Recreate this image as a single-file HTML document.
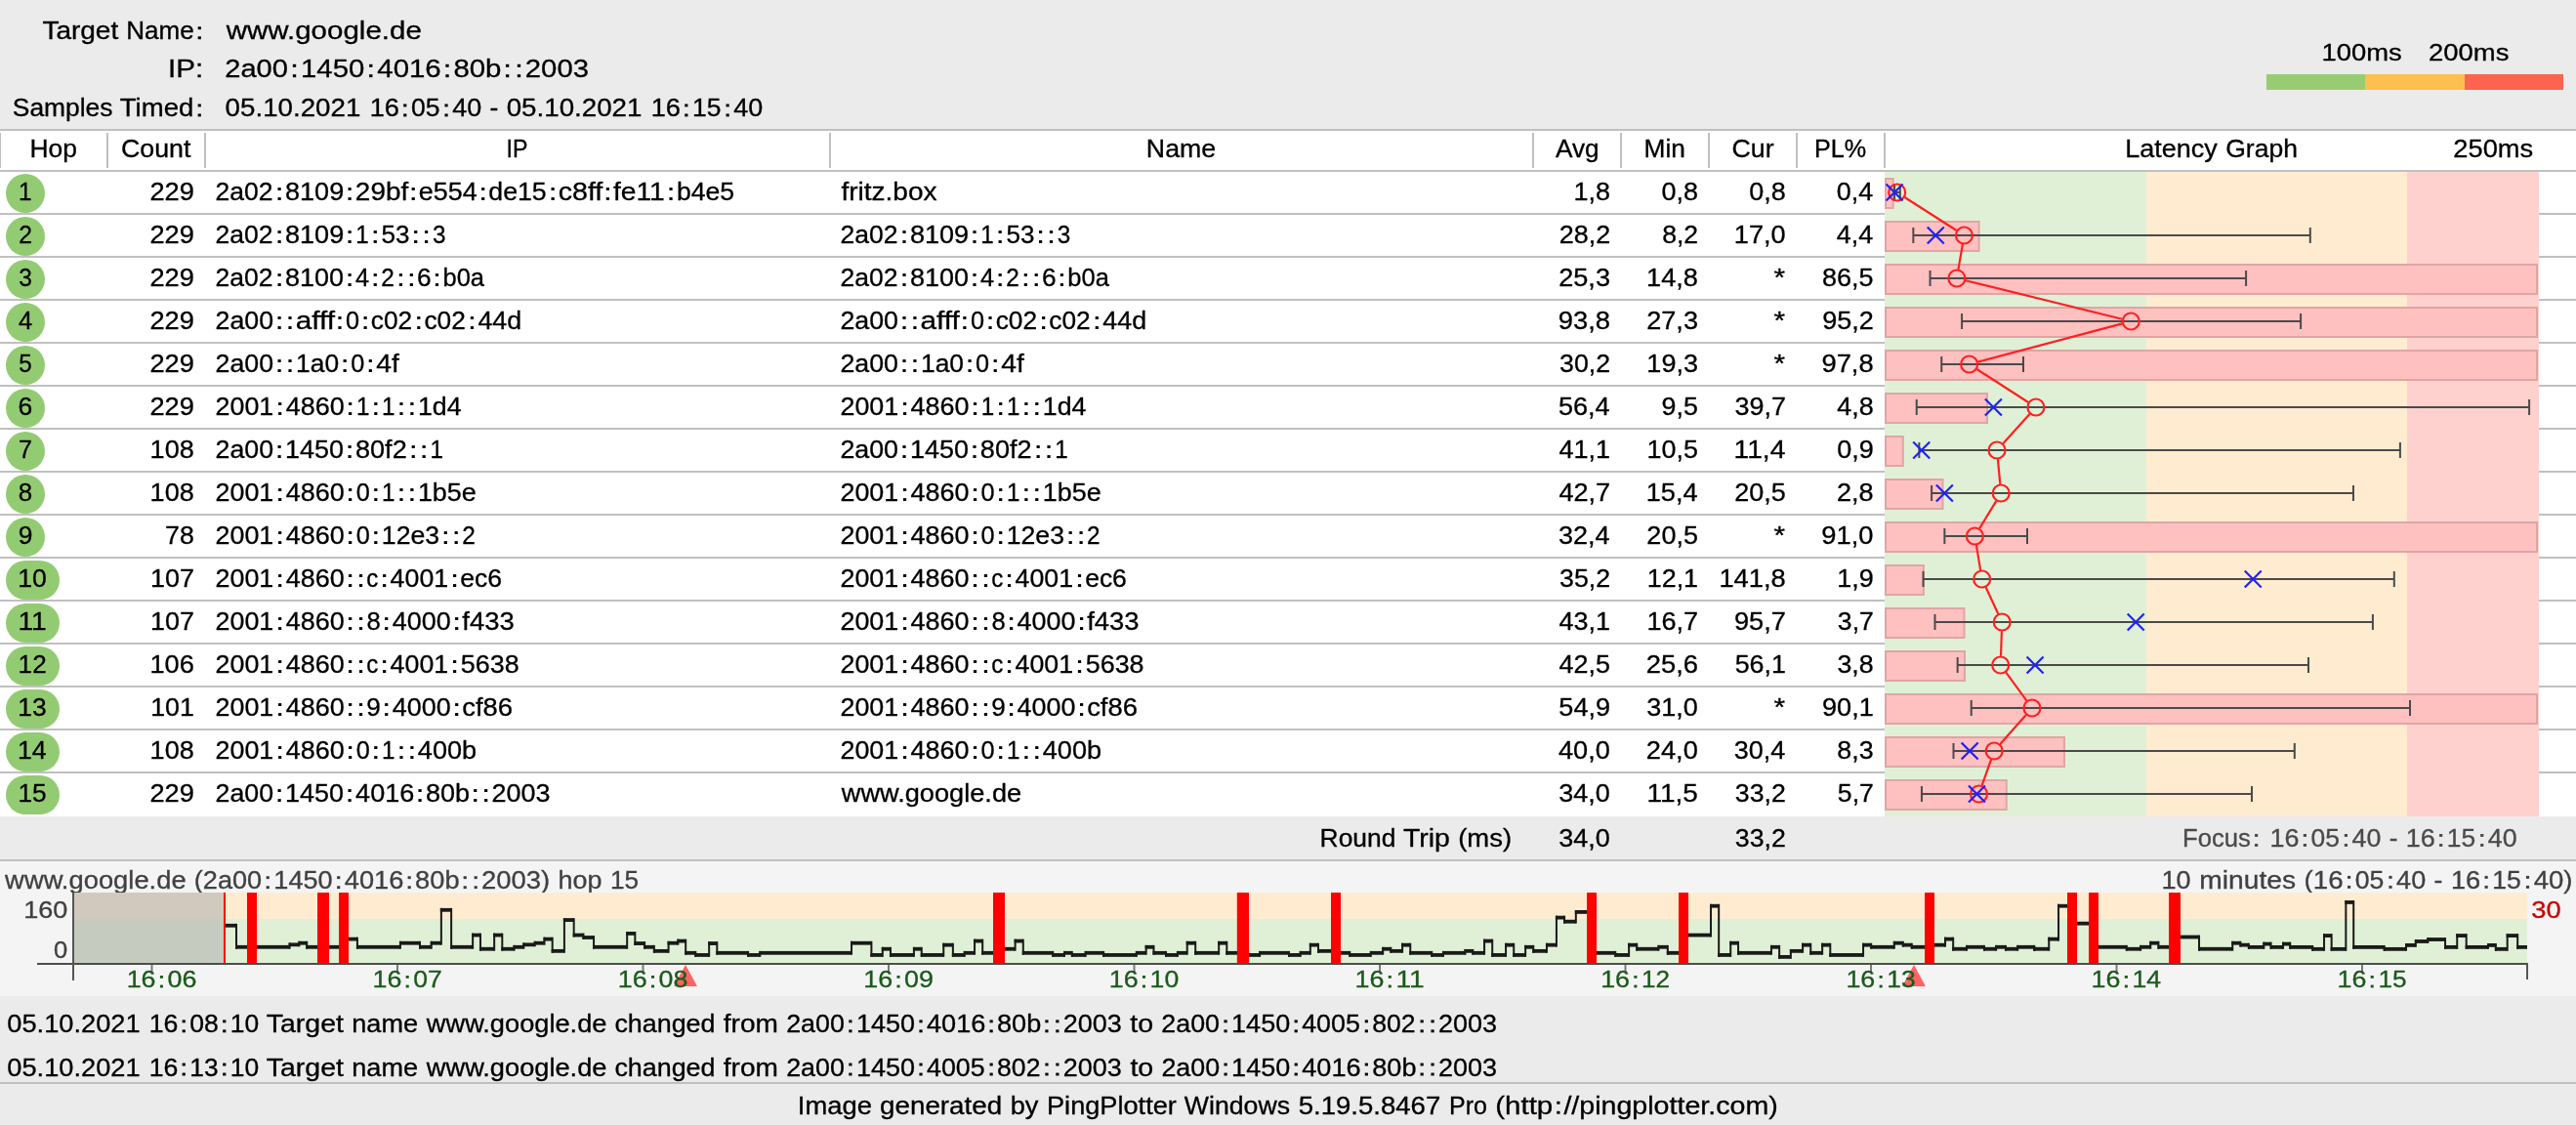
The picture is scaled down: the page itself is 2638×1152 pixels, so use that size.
<!DOCTYPE html>
<html><head><meta charset="utf-8"><title>PingPlotter</title>
<style>html,body{margin:0;padding:0;background:#fff;width:2638px;height:1152px;overflow:hidden}svg text{font-family:"Liberation Sans", sans-serif} svg{will-change:transform}</style>
</head><body>
<svg width="2638" height="1152" viewBox="0 0 2638 1152" style="display:block"><rect x="0.00" y="0.00" width="2638.00" height="132.00" fill="#ebebeb" />
<text x="43.40" y="40.20" font-size="25" fill="#000" stroke="#000" stroke-width="0.3" textLength="77.83" lengthAdjust="spacingAndGlyphs">Target</text>
<text x="129.29" y="40.20" font-size="25" fill="#000" stroke="#000" stroke-width="0.3" textLength="69.51" lengthAdjust="spacingAndGlyphs">Name</text>
<rect x="202.68" y="27.30" width="3.20" height="2.90" fill="#000"/>
<rect x="202.68" y="37.30" width="3.20" height="2.90" fill="#000"/>
<text x="171.96" y="79.20" font-size="25" fill="#000" stroke="#000" stroke-width="0.3" textLength="36.24" lengthAdjust="spacingAndGlyphs">IP:</text>
<text x="12.80" y="119.40" font-size="25" fill="#000" stroke="#000" stroke-width="0.3" textLength="102.71" lengthAdjust="spacingAndGlyphs">Samples</text>
<text x="122.75" y="119.40" font-size="25" fill="#000" stroke="#000" stroke-width="0.3" textLength="75.56" lengthAdjust="spacingAndGlyphs">Timed</text>
<rect x="202.65" y="106.50" width="3.20" height="2.90" fill="#000"/>
<rect x="202.65" y="116.50" width="3.20" height="2.90" fill="#000"/>
<text x="231.74" y="40.20" font-size="26" fill="#000" stroke="#000" stroke-width="0.3" textLength="200.06" lengthAdjust="spacingAndGlyphs">www.google.de</text>
<text x="230.24" y="79.20" font-size="26" fill="#000" stroke="#000" stroke-width="0.3" textLength="64.75" lengthAdjust="spacingAndGlyphs">2a00</text>
<rect x="299.85" y="65.78" width="3.33" height="3.02" fill="#000"/>
<rect x="299.85" y="76.18" width="3.33" height="3.02" fill="#000"/>
<text x="308.06" y="79.20" font-size="26" fill="#000" stroke="#000" stroke-width="0.3" textLength="65.18" lengthAdjust="spacingAndGlyphs">1450</text>
<rect x="378.10" y="65.78" width="3.33" height="3.02" fill="#000"/>
<rect x="378.10" y="76.18" width="3.33" height="3.02" fill="#000"/>
<text x="386.28" y="79.20" font-size="26" fill="#000" stroke="#000" stroke-width="0.3" textLength="65.45" lengthAdjust="spacingAndGlyphs">4016</text>
<rect x="456.35" y="65.78" width="3.33" height="3.02" fill="#000"/>
<rect x="456.35" y="76.18" width="3.33" height="3.02" fill="#000"/>
<text x="464.42" y="79.20" font-size="26" fill="#000" stroke="#000" stroke-width="0.3" textLength="49.08" lengthAdjust="spacingAndGlyphs">80b</text>
<rect x="517.96" y="65.78" width="3.33" height="3.02" fill="#000"/>
<rect x="517.96" y="76.18" width="3.33" height="3.02" fill="#000"/>
<rect x="529.81" y="65.78" width="3.33" height="3.02" fill="#000"/>
<rect x="529.81" y="76.18" width="3.33" height="3.02" fill="#000"/>
<text x="537.83" y="79.20" font-size="26" fill="#000" stroke="#000" stroke-width="0.3" textLength="65.16" lengthAdjust="spacingAndGlyphs">2003</text>
<text x="230.62" y="119.40" font-size="25" fill="#000" stroke="#000" stroke-width="0.3" textLength="138.75" lengthAdjust="spacingAndGlyphs">05.10.2021</text>
<text x="378.68" y="119.40" font-size="25" fill="#000" stroke="#000" stroke-width="0.3" textLength="30.18" lengthAdjust="spacingAndGlyphs">16</text>
<rect x="413.17" y="106.50" width="3.20" height="2.90" fill="#000"/>
<rect x="413.17" y="116.50" width="3.20" height="2.90" fill="#000"/>
<text x="420.90" y="119.40" font-size="25" fill="#000" stroke="#000" stroke-width="0.3" textLength="29.55" lengthAdjust="spacingAndGlyphs">05</text>
<rect x="455.45" y="106.50" width="3.20" height="2.90" fill="#000"/>
<rect x="455.45" y="116.50" width="3.20" height="2.90" fill="#000"/>
<text x="463.18" y="119.40" font-size="25" fill="#000" stroke="#000" stroke-width="0.3" textLength="30.01" lengthAdjust="spacingAndGlyphs">40</text>
<text x="501.56" y="119.40" font-size="25" fill="#000" stroke="#000" stroke-width="0.3" textLength="8.79" lengthAdjust="spacingAndGlyphs">-</text>
<text x="518.69" y="119.40" font-size="25" fill="#000" stroke="#000" stroke-width="0.3" textLength="138.75" lengthAdjust="spacingAndGlyphs">05.10.2021</text>
<text x="666.75" y="119.40" font-size="25" fill="#000" stroke="#000" stroke-width="0.3" textLength="30.18" lengthAdjust="spacingAndGlyphs">16</text>
<rect x="701.24" y="106.50" width="3.20" height="2.90" fill="#000"/>
<rect x="701.24" y="116.50" width="3.20" height="2.90" fill="#000"/>
<text x="709.07" y="119.40" font-size="25" fill="#000" stroke="#000" stroke-width="0.3" textLength="29.45" lengthAdjust="spacingAndGlyphs">15</text>
<rect x="743.52" y="106.50" width="3.20" height="2.90" fill="#000"/>
<rect x="743.52" y="116.50" width="3.20" height="2.90" fill="#000"/>
<text x="751.25" y="119.40" font-size="25" fill="#000" stroke="#000" stroke-width="0.3" textLength="30.01" lengthAdjust="spacingAndGlyphs">40</text>
<text x="2377.51" y="61.60" font-size="24" fill="#000" stroke="#000" stroke-width="0.3" textLength="82.28" lengthAdjust="spacingAndGlyphs">100ms</text>
<text x="2487.02" y="61.60" font-size="24" fill="#000" stroke="#000" stroke-width="0.3" textLength="82.37" lengthAdjust="spacingAndGlyphs">200ms</text>
<rect x="2321.00" y="76.00" width="101.00" height="16.00" fill="#98cc72" />
<rect x="2422.00" y="76.00" width="102.00" height="16.00" fill="#fdbf50" />
<rect x="2524.00" y="76.00" width="101.00" height="16.00" fill="#fc6450" />
<rect x="0.00" y="132.00" width="2638.00" height="704.00" fill="#fff" />
<rect x="0.00" y="132.00" width="2638.00" height="2.00" fill="#c0c0c0" />
<rect x="0.00" y="174.00" width="2638.00" height="2.00" fill="#c0c0c0" />
<rect x="0.00" y="136.00" width="1.00" height="36.00" fill="#c0c0c0" />
<rect x="109.00" y="136.00" width="2.00" height="36.00" fill="#c0c0c0" />
<rect x="209.00" y="136.00" width="2.00" height="36.00" fill="#c0c0c0" />
<rect x="849.00" y="136.00" width="2.00" height="36.00" fill="#c0c0c0" />
<rect x="1569.00" y="136.00" width="2.00" height="36.00" fill="#c0c0c0" />
<rect x="1659.00" y="136.00" width="2.00" height="36.00" fill="#c0c0c0" />
<rect x="1749.00" y="136.00" width="2.00" height="36.00" fill="#c0c0c0" />
<rect x="1839.00" y="136.00" width="2.00" height="36.00" fill="#c0c0c0" />
<rect x="1929.00" y="136.00" width="2.00" height="36.00" fill="#c0c0c0" />
<text x="30.43" y="161.00" font-size="25" fill="#000" stroke="#000" stroke-width="0.3" textLength="48.48" lengthAdjust="spacingAndGlyphs">Hop</text>
<text x="123.94" y="161.00" font-size="25" fill="#000" stroke="#000" stroke-width="0.3" textLength="71.46" lengthAdjust="spacingAndGlyphs">Count</text>
<text x="518.58" y="161.00" font-size="25" fill="#000" stroke="#000" stroke-width="0.3" textLength="21.92" lengthAdjust="spacingAndGlyphs">IP</text>
<text x="1173.89" y="161.00" font-size="25" fill="#000" stroke="#000" stroke-width="0.3" textLength="71.22" lengthAdjust="spacingAndGlyphs">Name</text>
<text x="1592.95" y="161.00" font-size="25" fill="#000" stroke="#000" stroke-width="0.3" textLength="44.72" lengthAdjust="spacingAndGlyphs">Avg</text>
<text x="1683.64" y="161.00" font-size="25" fill="#000" stroke="#000" stroke-width="0.3" textLength="42.36" lengthAdjust="spacingAndGlyphs">Min</text>
<text x="1773.44" y="161.00" font-size="25" fill="#000" stroke="#000" stroke-width="0.3" textLength="43.21" lengthAdjust="spacingAndGlyphs">Cur</text>
<text x="1858.04" y="161.00" font-size="25" fill="#000" stroke="#000" stroke-width="0.3" textLength="53.16" lengthAdjust="spacingAndGlyphs">PL%</text>
<text x="2176.28" y="161.00" font-size="25" fill="#000" stroke="#000" stroke-width="0.3" textLength="94.59" lengthAdjust="spacingAndGlyphs">Latency</text>
<text x="2279.23" y="161.00" font-size="25" fill="#000" stroke="#000" stroke-width="0.3" textLength="73.69" lengthAdjust="spacingAndGlyphs">Graph</text>
<text x="2512.33" y="161.00" font-size="25" fill="#000" stroke="#000" stroke-width="0.3" textLength="81.86" lengthAdjust="spacingAndGlyphs">250ms</text>
<rect x="1930.00" y="176.00" width="268.00" height="660.00" fill="#e0f0d6" />
<rect x="2198.00" y="176.00" width="267.00" height="660.00" fill="#ffecd0" />
<rect x="2465.00" y="176.00" width="135.00" height="660.00" fill="#fed1ce" />
<rect x="0.00" y="218.00" width="1930.00" height="2.00" fill="#c0c0c0" />
<rect x="2600.00" y="218.00" width="38.00" height="2.00" fill="#c0c0c0" />
<rect x="0.00" y="262.00" width="1930.00" height="2.00" fill="#c0c0c0" />
<rect x="2600.00" y="262.00" width="38.00" height="2.00" fill="#c0c0c0" />
<rect x="0.00" y="306.00" width="1930.00" height="2.00" fill="#c0c0c0" />
<rect x="2600.00" y="306.00" width="38.00" height="2.00" fill="#c0c0c0" />
<rect x="0.00" y="350.00" width="1930.00" height="2.00" fill="#c0c0c0" />
<rect x="2600.00" y="350.00" width="38.00" height="2.00" fill="#c0c0c0" />
<rect x="0.00" y="394.00" width="1930.00" height="2.00" fill="#c0c0c0" />
<rect x="2600.00" y="394.00" width="38.00" height="2.00" fill="#c0c0c0" />
<rect x="0.00" y="438.00" width="1930.00" height="2.00" fill="#c0c0c0" />
<rect x="2600.00" y="438.00" width="38.00" height="2.00" fill="#c0c0c0" />
<rect x="0.00" y="482.00" width="1930.00" height="2.00" fill="#c0c0c0" />
<rect x="2600.00" y="482.00" width="38.00" height="2.00" fill="#c0c0c0" />
<rect x="0.00" y="526.00" width="1930.00" height="2.00" fill="#c0c0c0" />
<rect x="2600.00" y="526.00" width="38.00" height="2.00" fill="#c0c0c0" />
<rect x="0.00" y="570.00" width="1930.00" height="2.00" fill="#c0c0c0" />
<rect x="2600.00" y="570.00" width="38.00" height="2.00" fill="#c0c0c0" />
<rect x="0.00" y="614.00" width="1930.00" height="2.00" fill="#c0c0c0" />
<rect x="2600.00" y="614.00" width="38.00" height="2.00" fill="#c0c0c0" />
<rect x="0.00" y="658.00" width="1930.00" height="2.00" fill="#c0c0c0" />
<rect x="2600.00" y="658.00" width="38.00" height="2.00" fill="#c0c0c0" />
<rect x="0.00" y="702.00" width="1930.00" height="2.00" fill="#c0c0c0" />
<rect x="2600.00" y="702.00" width="38.00" height="2.00" fill="#c0c0c0" />
<rect x="0.00" y="746.00" width="1930.00" height="2.00" fill="#c0c0c0" />
<rect x="2600.00" y="746.00" width="38.00" height="2.00" fill="#c0c0c0" />
<rect x="0.00" y="790.00" width="1930.00" height="2.00" fill="#c0c0c0" />
<rect x="2600.00" y="790.00" width="38.00" height="2.00" fill="#c0c0c0" />
<circle cx="26" cy="198" r="20" fill="#93cb73"/>
<text x="18.88" y="205.00" font-size="25" fill="#000" stroke="#000" stroke-width="0.3" textLength="13.57" lengthAdjust="spacingAndGlyphs">1</text>
<text x="153.44" y="205.00" font-size="25" fill="#000" stroke="#000" stroke-width="0.3" textLength="45.45" lengthAdjust="spacingAndGlyphs">229</text>
<text x="220.57" y="205.00" font-size="25" fill="#000" stroke="#000" stroke-width="0.3" textLength="59.02" lengthAdjust="spacingAndGlyphs">2a02</text>
<rect x="284.51" y="192.10" width="3.20" height="2.90" fill="#000"/>
<rect x="284.51" y="202.10" width="3.20" height="2.90" fill="#000"/>
<text x="292.01" y="205.00" font-size="25" fill="#000" stroke="#000" stroke-width="0.3" textLength="60.22" lengthAdjust="spacingAndGlyphs">8109</text>
<rect x="356.49" y="192.10" width="3.20" height="2.90" fill="#000"/>
<rect x="356.49" y="202.10" width="3.20" height="2.90" fill="#000"/>
<text x="363.89" y="205.00" font-size="25" fill="#000" stroke="#000" stroke-width="0.3" textLength="54.28" lengthAdjust="spacingAndGlyphs">29bf</text>
<rect x="421.61" y="192.10" width="3.20" height="2.90" fill="#000"/>
<rect x="421.61" y="202.10" width="3.20" height="2.90" fill="#000"/>
<text x="428.84" y="205.00" font-size="25" fill="#000" stroke="#000" stroke-width="0.3" textLength="59.83" lengthAdjust="spacingAndGlyphs">e554</text>
<rect x="493.08" y="192.10" width="3.20" height="2.90" fill="#000"/>
<rect x="493.08" y="202.10" width="3.20" height="2.90" fill="#000"/>
<text x="500.33" y="205.00" font-size="25" fill="#000" stroke="#000" stroke-width="0.3" textLength="59.36" lengthAdjust="spacingAndGlyphs">de15</text>
<rect x="564.52" y="192.10" width="3.20" height="2.90" fill="#000"/>
<rect x="564.52" y="202.10" width="3.20" height="2.90" fill="#000"/>
<text x="571.68" y="205.00" font-size="25" fill="#000" stroke="#000" stroke-width="0.3" textLength="45.66" lengthAdjust="spacingAndGlyphs">c8ff</text>
<rect x="620.78" y="192.10" width="3.20" height="2.90" fill="#000"/>
<rect x="620.78" y="202.10" width="3.20" height="2.90" fill="#000"/>
<text x="627.99" y="205.00" font-size="25" fill="#000" stroke="#000" stroke-width="0.3" textLength="52.69" lengthAdjust="spacingAndGlyphs">fe11</text>
<rect x="685.43" y="192.10" width="3.20" height="2.90" fill="#000"/>
<rect x="685.43" y="202.10" width="3.20" height="2.90" fill="#000"/>
<text x="692.95" y="205.00" font-size="25" fill="#000" stroke="#000" stroke-width="0.3" textLength="59.09" lengthAdjust="spacingAndGlyphs">b4e5</text>
<text x="861.40" y="205.00" font-size="25" fill="#000" stroke="#000" stroke-width="0.3" textLength="98.10" lengthAdjust="spacingAndGlyphs">fritz.box</text>
<text x="1611.52" y="205.00" font-size="25" fill="#000" stroke="#000" stroke-width="0.3" textLength="37.45" lengthAdjust="spacingAndGlyphs">1,8</text>
<text x="1701.45" y="205.00" font-size="25" fill="#000" stroke="#000" stroke-width="0.3" textLength="37.52" lengthAdjust="spacingAndGlyphs">0,8</text>
<text x="1791.25" y="205.00" font-size="25" fill="#000" stroke="#000" stroke-width="0.3" textLength="37.52" lengthAdjust="spacingAndGlyphs">0,8</text>
<text x="1880.86" y="205.00" font-size="25" fill="#000" stroke="#000" stroke-width="0.3" textLength="37.43" lengthAdjust="spacingAndGlyphs">0,4</text>
<circle cx="26" cy="242" r="20" fill="#93cb73"/>
<text x="19.15" y="249.00" font-size="25" fill="#000" stroke="#000" stroke-width="0.3" textLength="13.70" lengthAdjust="spacingAndGlyphs">2</text>
<text x="153.44" y="249.00" font-size="25" fill="#000" stroke="#000" stroke-width="0.3" textLength="45.45" lengthAdjust="spacingAndGlyphs">229</text>
<text x="220.57" y="249.00" font-size="25" fill="#000" stroke="#000" stroke-width="0.3" textLength="59.02" lengthAdjust="spacingAndGlyphs">2a02</text>
<rect x="284.51" y="236.10" width="3.20" height="2.90" fill="#000"/>
<rect x="284.51" y="246.10" width="3.20" height="2.90" fill="#000"/>
<text x="292.01" y="249.00" font-size="25" fill="#000" stroke="#000" stroke-width="0.3" textLength="60.22" lengthAdjust="spacingAndGlyphs">8109</text>
<rect x="356.49" y="236.10" width="3.20" height="2.90" fill="#000"/>
<rect x="356.49" y="246.10" width="3.20" height="2.90" fill="#000"/>
<text x="364.33" y="249.00" font-size="25" fill="#000" stroke="#000" stroke-width="0.3" textLength="13.44" lengthAdjust="spacingAndGlyphs">1</text>
<rect x="382.66" y="236.10" width="3.20" height="2.90" fill="#000"/>
<rect x="382.66" y="246.10" width="3.20" height="2.90" fill="#000"/>
<text x="390.51" y="249.00" font-size="25" fill="#000" stroke="#000" stroke-width="0.3" textLength="28.95" lengthAdjust="spacingAndGlyphs">53</text>
<rect x="424.09" y="236.10" width="3.20" height="2.90" fill="#000"/>
<rect x="424.09" y="246.10" width="3.20" height="2.90" fill="#000"/>
<rect x="434.99" y="236.10" width="3.20" height="2.90" fill="#000"/>
<rect x="434.99" y="246.10" width="3.20" height="2.90" fill="#000"/>
<text x="442.94" y="249.00" font-size="25" fill="#000" stroke="#000" stroke-width="0.3" textLength="13.51" lengthAdjust="spacingAndGlyphs">3</text>
<text x="860.47" y="249.00" font-size="25" fill="#000" stroke="#000" stroke-width="0.3" textLength="59.02" lengthAdjust="spacingAndGlyphs">2a02</text>
<rect x="924.41" y="236.10" width="3.20" height="2.90" fill="#000"/>
<rect x="924.41" y="246.10" width="3.20" height="2.90" fill="#000"/>
<text x="931.91" y="249.00" font-size="25" fill="#000" stroke="#000" stroke-width="0.3" textLength="60.22" lengthAdjust="spacingAndGlyphs">8109</text>
<rect x="996.39" y="236.10" width="3.20" height="2.90" fill="#000"/>
<rect x="996.39" y="246.10" width="3.20" height="2.90" fill="#000"/>
<text x="1004.23" y="249.00" font-size="25" fill="#000" stroke="#000" stroke-width="0.3" textLength="13.44" lengthAdjust="spacingAndGlyphs">1</text>
<rect x="1022.56" y="236.10" width="3.20" height="2.90" fill="#000"/>
<rect x="1022.56" y="246.10" width="3.20" height="2.90" fill="#000"/>
<text x="1030.41" y="249.00" font-size="25" fill="#000" stroke="#000" stroke-width="0.3" textLength="28.95" lengthAdjust="spacingAndGlyphs">53</text>
<rect x="1063.99" y="236.10" width="3.20" height="2.90" fill="#000"/>
<rect x="1063.99" y="246.10" width="3.20" height="2.90" fill="#000"/>
<rect x="1074.89" y="236.10" width="3.20" height="2.90" fill="#000"/>
<rect x="1074.89" y="246.10" width="3.20" height="2.90" fill="#000"/>
<text x="1082.84" y="249.00" font-size="25" fill="#000" stroke="#000" stroke-width="0.3" textLength="13.51" lengthAdjust="spacingAndGlyphs">3</text>
<text x="1596.67" y="249.00" font-size="25" fill="#000" stroke="#000" stroke-width="0.3" textLength="52.48" lengthAdjust="spacingAndGlyphs">28,2</text>
<text x="1702.17" y="249.00" font-size="25" fill="#000" stroke="#000" stroke-width="0.3" textLength="36.97" lengthAdjust="spacingAndGlyphs">8,2</text>
<text x="1775.83" y="249.00" font-size="25" fill="#000" stroke="#000" stroke-width="0.3" textLength="52.83" lengthAdjust="spacingAndGlyphs">17,0</text>
<text x="1880.88" y="249.00" font-size="25" fill="#000" stroke="#000" stroke-width="0.3" textLength="37.41" lengthAdjust="spacingAndGlyphs">4,4</text>
<circle cx="26" cy="286" r="20" fill="#93cb73"/>
<text x="19.25" y="293.00" font-size="25" fill="#000" stroke="#000" stroke-width="0.3" textLength="13.65" lengthAdjust="spacingAndGlyphs">3</text>
<text x="153.44" y="293.00" font-size="25" fill="#000" stroke="#000" stroke-width="0.3" textLength="45.45" lengthAdjust="spacingAndGlyphs">229</text>
<text x="220.57" y="293.00" font-size="25" fill="#000" stroke="#000" stroke-width="0.3" textLength="59.02" lengthAdjust="spacingAndGlyphs">2a02</text>
<rect x="284.51" y="280.10" width="3.20" height="2.90" fill="#000"/>
<rect x="284.51" y="290.10" width="3.20" height="2.90" fill="#000"/>
<text x="292.01" y="293.00" font-size="25" fill="#000" stroke="#000" stroke-width="0.3" textLength="60.08" lengthAdjust="spacingAndGlyphs">8100</text>
<rect x="356.49" y="280.10" width="3.20" height="2.90" fill="#000"/>
<rect x="356.49" y="290.10" width="3.20" height="2.90" fill="#000"/>
<text x="364.12" y="293.00" font-size="25" fill="#000" stroke="#000" stroke-width="0.3" textLength="14.07" lengthAdjust="spacingAndGlyphs">4</text>
<rect x="382.66" y="280.10" width="3.20" height="2.90" fill="#000"/>
<rect x="382.66" y="290.10" width="3.20" height="2.90" fill="#000"/>
<text x="390.23" y="293.00" font-size="25" fill="#000" stroke="#000" stroke-width="0.3" textLength="13.56" lengthAdjust="spacingAndGlyphs">2</text>
<rect x="408.83" y="280.10" width="3.20" height="2.90" fill="#000"/>
<rect x="408.83" y="290.10" width="3.20" height="2.90" fill="#000"/>
<rect x="419.72" y="280.10" width="3.20" height="2.90" fill="#000"/>
<rect x="419.72" y="290.10" width="3.20" height="2.90" fill="#000"/>
<text x="427.11" y="293.00" font-size="25" fill="#000" stroke="#000" stroke-width="0.3" textLength="14.56" lengthAdjust="spacingAndGlyphs">6</text>
<rect x="445.89" y="280.10" width="3.20" height="2.90" fill="#000"/>
<rect x="445.89" y="290.10" width="3.20" height="2.90" fill="#000"/>
<text x="453.47" y="293.00" font-size="25" fill="#000" stroke="#000" stroke-width="0.3" textLength="42.49" lengthAdjust="spacingAndGlyphs">b0a</text>
<text x="860.47" y="293.00" font-size="25" fill="#000" stroke="#000" stroke-width="0.3" textLength="59.02" lengthAdjust="spacingAndGlyphs">2a02</text>
<rect x="924.41" y="280.10" width="3.20" height="2.90" fill="#000"/>
<rect x="924.41" y="290.10" width="3.20" height="2.90" fill="#000"/>
<text x="931.91" y="293.00" font-size="25" fill="#000" stroke="#000" stroke-width="0.3" textLength="60.08" lengthAdjust="spacingAndGlyphs">8100</text>
<rect x="996.39" y="280.10" width="3.20" height="2.90" fill="#000"/>
<rect x="996.39" y="290.10" width="3.20" height="2.90" fill="#000"/>
<text x="1004.02" y="293.00" font-size="25" fill="#000" stroke="#000" stroke-width="0.3" textLength="14.07" lengthAdjust="spacingAndGlyphs">4</text>
<rect x="1022.56" y="280.10" width="3.20" height="2.90" fill="#000"/>
<rect x="1022.56" y="290.10" width="3.20" height="2.90" fill="#000"/>
<text x="1030.13" y="293.00" font-size="25" fill="#000" stroke="#000" stroke-width="0.3" textLength="13.56" lengthAdjust="spacingAndGlyphs">2</text>
<rect x="1048.73" y="280.10" width="3.20" height="2.90" fill="#000"/>
<rect x="1048.73" y="290.10" width="3.20" height="2.90" fill="#000"/>
<rect x="1059.62" y="280.10" width="3.20" height="2.90" fill="#000"/>
<rect x="1059.62" y="290.10" width="3.20" height="2.90" fill="#000"/>
<text x="1067.01" y="293.00" font-size="25" fill="#000" stroke="#000" stroke-width="0.3" textLength="14.56" lengthAdjust="spacingAndGlyphs">6</text>
<rect x="1085.79" y="280.10" width="3.20" height="2.90" fill="#000"/>
<rect x="1085.79" y="290.10" width="3.20" height="2.90" fill="#000"/>
<text x="1093.37" y="293.00" font-size="25" fill="#000" stroke="#000" stroke-width="0.3" textLength="42.49" lengthAdjust="spacingAndGlyphs">b0a</text>
<text x="1596.18" y="293.00" font-size="25" fill="#000" stroke="#000" stroke-width="0.3" textLength="52.81" lengthAdjust="spacingAndGlyphs">25,3</text>
<text x="1686.08" y="293.00" font-size="25" fill="#000" stroke="#000" stroke-width="0.3" textLength="52.90" lengthAdjust="spacingAndGlyphs">14,8</text>
<text x="1816.44" y="293.00" font-size="25" fill="#000" stroke="#000" stroke-width="0.3" textLength="11.62" lengthAdjust="spacingAndGlyphs">*</text>
<text x="1866.12" y="293.00" font-size="25" fill="#000" stroke="#000" stroke-width="0.3" textLength="52.51" lengthAdjust="spacingAndGlyphs">86,5</text>
<circle cx="26" cy="330" r="20" fill="#93cb73"/>
<text x="18.97" y="337.00" font-size="25" fill="#000" stroke="#000" stroke-width="0.3" textLength="14.21" lengthAdjust="spacingAndGlyphs">4</text>
<text x="153.44" y="337.00" font-size="25" fill="#000" stroke="#000" stroke-width="0.3" textLength="45.45" lengthAdjust="spacingAndGlyphs">229</text>
<text x="220.55" y="337.00" font-size="25" fill="#000" stroke="#000" stroke-width="0.3" textLength="59.56" lengthAdjust="spacingAndGlyphs">2a00</text>
<rect x="284.51" y="324.10" width="3.20" height="2.90" fill="#000"/>
<rect x="284.51" y="334.10" width="3.20" height="2.90" fill="#000"/>
<rect x="295.41" y="324.10" width="3.20" height="2.90" fill="#000"/>
<rect x="295.41" y="334.10" width="3.20" height="2.90" fill="#000"/>
<text x="302.67" y="337.00" font-size="25" fill="#000" stroke="#000" stroke-width="0.3" textLength="40.26" lengthAdjust="spacingAndGlyphs">afff</text>
<rect x="346.36" y="324.10" width="3.20" height="2.90" fill="#000"/>
<rect x="346.36" y="334.10" width="3.20" height="2.90" fill="#000"/>
<text x="354.00" y="337.00" font-size="25" fill="#000" stroke="#000" stroke-width="0.3" textLength="14.07" lengthAdjust="spacingAndGlyphs">0</text>
<rect x="372.53" y="324.10" width="3.20" height="2.90" fill="#000"/>
<rect x="372.53" y="334.10" width="3.20" height="2.90" fill="#000"/>
<text x="379.78" y="337.00" font-size="25" fill="#000" stroke="#000" stroke-width="0.3" textLength="42.45" lengthAdjust="spacingAndGlyphs">c02</text>
<rect x="427.17" y="324.10" width="3.20" height="2.90" fill="#000"/>
<rect x="427.17" y="334.10" width="3.20" height="2.90" fill="#000"/>
<text x="434.41" y="337.00" font-size="25" fill="#000" stroke="#000" stroke-width="0.3" textLength="42.45" lengthAdjust="spacingAndGlyphs">c02</text>
<rect x="481.80" y="324.10" width="3.20" height="2.90" fill="#000"/>
<rect x="481.80" y="334.10" width="3.20" height="2.90" fill="#000"/>
<text x="489.40" y="337.00" font-size="25" fill="#000" stroke="#000" stroke-width="0.3" textLength="44.77" lengthAdjust="spacingAndGlyphs">44d</text>
<text x="860.45" y="337.00" font-size="25" fill="#000" stroke="#000" stroke-width="0.3" textLength="59.56" lengthAdjust="spacingAndGlyphs">2a00</text>
<rect x="924.41" y="324.10" width="3.20" height="2.90" fill="#000"/>
<rect x="924.41" y="334.10" width="3.20" height="2.90" fill="#000"/>
<rect x="935.31" y="324.10" width="3.20" height="2.90" fill="#000"/>
<rect x="935.31" y="334.10" width="3.20" height="2.90" fill="#000"/>
<text x="942.57" y="337.00" font-size="25" fill="#000" stroke="#000" stroke-width="0.3" textLength="40.26" lengthAdjust="spacingAndGlyphs">afff</text>
<rect x="986.26" y="324.10" width="3.20" height="2.90" fill="#000"/>
<rect x="986.26" y="334.10" width="3.20" height="2.90" fill="#000"/>
<text x="993.90" y="337.00" font-size="25" fill="#000" stroke="#000" stroke-width="0.3" textLength="14.07" lengthAdjust="spacingAndGlyphs">0</text>
<rect x="1012.43" y="324.10" width="3.20" height="2.90" fill="#000"/>
<rect x="1012.43" y="334.10" width="3.20" height="2.90" fill="#000"/>
<text x="1019.68" y="337.00" font-size="25" fill="#000" stroke="#000" stroke-width="0.3" textLength="42.45" lengthAdjust="spacingAndGlyphs">c02</text>
<rect x="1067.07" y="324.10" width="3.20" height="2.90" fill="#000"/>
<rect x="1067.07" y="334.10" width="3.20" height="2.90" fill="#000"/>
<text x="1074.31" y="337.00" font-size="25" fill="#000" stroke="#000" stroke-width="0.3" textLength="42.45" lengthAdjust="spacingAndGlyphs">c02</text>
<rect x="1121.70" y="324.10" width="3.20" height="2.90" fill="#000"/>
<rect x="1121.70" y="334.10" width="3.20" height="2.90" fill="#000"/>
<text x="1129.30" y="337.00" font-size="25" fill="#000" stroke="#000" stroke-width="0.3" textLength="44.77" lengthAdjust="spacingAndGlyphs">44d</text>
<text x="1595.73" y="337.00" font-size="25" fill="#000" stroke="#000" stroke-width="0.3" textLength="53.26" lengthAdjust="spacingAndGlyphs">93,8</text>
<text x="1686.18" y="337.00" font-size="25" fill="#000" stroke="#000" stroke-width="0.3" textLength="52.81" lengthAdjust="spacingAndGlyphs">27,3</text>
<text x="1816.44" y="337.00" font-size="25" fill="#000" stroke="#000" stroke-width="0.3" textLength="11.62" lengthAdjust="spacingAndGlyphs">*</text>
<text x="1866.21" y="337.00" font-size="25" fill="#000" stroke="#000" stroke-width="0.3" textLength="52.65" lengthAdjust="spacingAndGlyphs">95,2</text>
<circle cx="26" cy="374" r="20" fill="#93cb73"/>
<text x="19.32" y="381.00" font-size="25" fill="#000" stroke="#000" stroke-width="0.3" textLength="13.41" lengthAdjust="spacingAndGlyphs">5</text>
<text x="153.44" y="381.00" font-size="25" fill="#000" stroke="#000" stroke-width="0.3" textLength="45.45" lengthAdjust="spacingAndGlyphs">229</text>
<text x="220.55" y="381.00" font-size="25" fill="#000" stroke="#000" stroke-width="0.3" textLength="59.56" lengthAdjust="spacingAndGlyphs">2a00</text>
<rect x="284.51" y="368.10" width="3.20" height="2.90" fill="#000"/>
<rect x="284.51" y="378.10" width="3.20" height="2.90" fill="#000"/>
<rect x="295.41" y="368.10" width="3.20" height="2.90" fill="#000"/>
<rect x="295.41" y="378.10" width="3.20" height="2.90" fill="#000"/>
<text x="303.08" y="381.00" font-size="25" fill="#000" stroke="#000" stroke-width="0.3" textLength="44.06" lengthAdjust="spacingAndGlyphs">1a0</text>
<rect x="351.56" y="368.10" width="3.20" height="2.90" fill="#000"/>
<rect x="351.56" y="378.10" width="3.20" height="2.90" fill="#000"/>
<text x="359.19" y="381.00" font-size="25" fill="#000" stroke="#000" stroke-width="0.3" textLength="14.07" lengthAdjust="spacingAndGlyphs">0</text>
<rect x="377.72" y="368.10" width="3.20" height="2.90" fill="#000"/>
<rect x="377.72" y="378.10" width="3.20" height="2.90" fill="#000"/>
<text x="385.29" y="381.00" font-size="25" fill="#000" stroke="#000" stroke-width="0.3" textLength="23.61" lengthAdjust="spacingAndGlyphs">4f</text>
<text x="860.45" y="381.00" font-size="25" fill="#000" stroke="#000" stroke-width="0.3" textLength="59.56" lengthAdjust="spacingAndGlyphs">2a00</text>
<rect x="924.41" y="368.10" width="3.20" height="2.90" fill="#000"/>
<rect x="924.41" y="378.10" width="3.20" height="2.90" fill="#000"/>
<rect x="935.31" y="368.10" width="3.20" height="2.90" fill="#000"/>
<rect x="935.31" y="378.10" width="3.20" height="2.90" fill="#000"/>
<text x="942.98" y="381.00" font-size="25" fill="#000" stroke="#000" stroke-width="0.3" textLength="44.06" lengthAdjust="spacingAndGlyphs">1a0</text>
<rect x="991.46" y="368.10" width="3.20" height="2.90" fill="#000"/>
<rect x="991.46" y="378.10" width="3.20" height="2.90" fill="#000"/>
<text x="999.09" y="381.00" font-size="25" fill="#000" stroke="#000" stroke-width="0.3" textLength="14.07" lengthAdjust="spacingAndGlyphs">0</text>
<rect x="1017.62" y="368.10" width="3.20" height="2.90" fill="#000"/>
<rect x="1017.62" y="378.10" width="3.20" height="2.90" fill="#000"/>
<text x="1025.19" y="381.00" font-size="25" fill="#000" stroke="#000" stroke-width="0.3" textLength="23.61" lengthAdjust="spacingAndGlyphs">4f</text>
<text x="1597.08" y="381.00" font-size="25" fill="#000" stroke="#000" stroke-width="0.3" textLength="52.06" lengthAdjust="spacingAndGlyphs">30,2</text>
<text x="1686.37" y="381.00" font-size="25" fill="#000" stroke="#000" stroke-width="0.3" textLength="52.61" lengthAdjust="spacingAndGlyphs">19,3</text>
<text x="1816.44" y="381.00" font-size="25" fill="#000" stroke="#000" stroke-width="0.3" textLength="11.62" lengthAdjust="spacingAndGlyphs">*</text>
<text x="1865.43" y="381.00" font-size="25" fill="#000" stroke="#000" stroke-width="0.3" textLength="53.26" lengthAdjust="spacingAndGlyphs">97,8</text>
<circle cx="26" cy="418" r="20" fill="#93cb73"/>
<text x="18.56" y="425.00" font-size="25" fill="#000" stroke="#000" stroke-width="0.3" textLength="14.71" lengthAdjust="spacingAndGlyphs">6</text>
<text x="153.44" y="425.00" font-size="25" fill="#000" stroke="#000" stroke-width="0.3" textLength="45.45" lengthAdjust="spacingAndGlyphs">229</text>
<text x="220.55" y="425.00" font-size="25" fill="#000" stroke="#000" stroke-width="0.3" textLength="59.77" lengthAdjust="spacingAndGlyphs">2001</text>
<rect x="285.08" y="412.10" width="3.20" height="2.90" fill="#000"/>
<rect x="285.08" y="422.10" width="3.20" height="2.90" fill="#000"/>
<text x="292.67" y="425.00" font-size="25" fill="#000" stroke="#000" stroke-width="0.3" textLength="59.98" lengthAdjust="spacingAndGlyphs">4860</text>
<rect x="357.05" y="412.10" width="3.20" height="2.90" fill="#000"/>
<rect x="357.05" y="422.10" width="3.20" height="2.90" fill="#000"/>
<text x="364.89" y="425.00" font-size="25" fill="#000" stroke="#000" stroke-width="0.3" textLength="13.44" lengthAdjust="spacingAndGlyphs">1</text>
<rect x="383.22" y="412.10" width="3.20" height="2.90" fill="#000"/>
<rect x="383.22" y="422.10" width="3.20" height="2.90" fill="#000"/>
<text x="391.06" y="425.00" font-size="25" fill="#000" stroke="#000" stroke-width="0.3" textLength="13.44" lengthAdjust="spacingAndGlyphs">1</text>
<rect x="409.39" y="412.10" width="3.20" height="2.90" fill="#000"/>
<rect x="409.39" y="422.10" width="3.20" height="2.90" fill="#000"/>
<rect x="420.29" y="412.10" width="3.20" height="2.90" fill="#000"/>
<rect x="420.29" y="422.10" width="3.20" height="2.90" fill="#000"/>
<text x="427.93" y="425.00" font-size="25" fill="#000" stroke="#000" stroke-width="0.3" textLength="44.61" lengthAdjust="spacingAndGlyphs">1d4</text>
<text x="860.45" y="425.00" font-size="25" fill="#000" stroke="#000" stroke-width="0.3" textLength="59.77" lengthAdjust="spacingAndGlyphs">2001</text>
<rect x="924.98" y="412.10" width="3.20" height="2.90" fill="#000"/>
<rect x="924.98" y="422.10" width="3.20" height="2.90" fill="#000"/>
<text x="932.57" y="425.00" font-size="25" fill="#000" stroke="#000" stroke-width="0.3" textLength="59.98" lengthAdjust="spacingAndGlyphs">4860</text>
<rect x="996.95" y="412.10" width="3.20" height="2.90" fill="#000"/>
<rect x="996.95" y="422.10" width="3.20" height="2.90" fill="#000"/>
<text x="1004.79" y="425.00" font-size="25" fill="#000" stroke="#000" stroke-width="0.3" textLength="13.44" lengthAdjust="spacingAndGlyphs">1</text>
<rect x="1023.12" y="412.10" width="3.20" height="2.90" fill="#000"/>
<rect x="1023.12" y="422.10" width="3.20" height="2.90" fill="#000"/>
<text x="1030.96" y="425.00" font-size="25" fill="#000" stroke="#000" stroke-width="0.3" textLength="13.44" lengthAdjust="spacingAndGlyphs">1</text>
<rect x="1049.29" y="412.10" width="3.20" height="2.90" fill="#000"/>
<rect x="1049.29" y="422.10" width="3.20" height="2.90" fill="#000"/>
<rect x="1060.19" y="412.10" width="3.20" height="2.90" fill="#000"/>
<rect x="1060.19" y="422.10" width="3.20" height="2.90" fill="#000"/>
<text x="1067.83" y="425.00" font-size="25" fill="#000" stroke="#000" stroke-width="0.3" textLength="44.61" lengthAdjust="spacingAndGlyphs">1d4</text>
<text x="1595.98" y="425.00" font-size="25" fill="#000" stroke="#000" stroke-width="0.3" textLength="52.62" lengthAdjust="spacingAndGlyphs">56,4</text>
<text x="1701.64" y="425.00" font-size="25" fill="#000" stroke="#000" stroke-width="0.3" textLength="37.29" lengthAdjust="spacingAndGlyphs">9,5</text>
<text x="1776.52" y="425.00" font-size="25" fill="#000" stroke="#000" stroke-width="0.3" textLength="52.44" lengthAdjust="spacingAndGlyphs">39,7</text>
<text x="1881.17" y="425.00" font-size="25" fill="#000" stroke="#000" stroke-width="0.3" textLength="37.50" lengthAdjust="spacingAndGlyphs">4,8</text>
<circle cx="26" cy="462" r="20" fill="#93cb73"/>
<text x="19.04" y="469.00" font-size="25" fill="#000" stroke="#000" stroke-width="0.3" textLength="13.90" lengthAdjust="spacingAndGlyphs">7</text>
<text x="153.59" y="469.00" font-size="25" fill="#000" stroke="#000" stroke-width="0.3" textLength="45.19" lengthAdjust="spacingAndGlyphs">108</text>
<text x="220.55" y="469.00" font-size="25" fill="#000" stroke="#000" stroke-width="0.3" textLength="59.56" lengthAdjust="spacingAndGlyphs">2a00</text>
<rect x="284.51" y="456.10" width="3.20" height="2.90" fill="#000"/>
<rect x="284.51" y="466.10" width="3.20" height="2.90" fill="#000"/>
<text x="292.14" y="469.00" font-size="25" fill="#000" stroke="#000" stroke-width="0.3" textLength="59.95" lengthAdjust="spacingAndGlyphs">1450</text>
<rect x="356.49" y="456.10" width="3.20" height="2.90" fill="#000"/>
<rect x="356.49" y="466.10" width="3.20" height="2.90" fill="#000"/>
<text x="363.98" y="469.00" font-size="25" fill="#000" stroke="#000" stroke-width="0.3" textLength="52.77" lengthAdjust="spacingAndGlyphs">80f2</text>
<rect x="421.65" y="456.10" width="3.20" height="2.90" fill="#000"/>
<rect x="421.65" y="466.10" width="3.20" height="2.90" fill="#000"/>
<rect x="432.54" y="456.10" width="3.20" height="2.90" fill="#000"/>
<rect x="432.54" y="466.10" width="3.20" height="2.90" fill="#000"/>
<text x="440.38" y="469.00" font-size="25" fill="#000" stroke="#000" stroke-width="0.3" textLength="13.44" lengthAdjust="spacingAndGlyphs">1</text>
<text x="860.45" y="469.00" font-size="25" fill="#000" stroke="#000" stroke-width="0.3" textLength="59.56" lengthAdjust="spacingAndGlyphs">2a00</text>
<rect x="924.41" y="456.10" width="3.20" height="2.90" fill="#000"/>
<rect x="924.41" y="466.10" width="3.20" height="2.90" fill="#000"/>
<text x="932.04" y="469.00" font-size="25" fill="#000" stroke="#000" stroke-width="0.3" textLength="59.95" lengthAdjust="spacingAndGlyphs">1450</text>
<rect x="996.39" y="456.10" width="3.20" height="2.90" fill="#000"/>
<rect x="996.39" y="466.10" width="3.20" height="2.90" fill="#000"/>
<text x="1003.88" y="469.00" font-size="25" fill="#000" stroke="#000" stroke-width="0.3" textLength="52.77" lengthAdjust="spacingAndGlyphs">80f2</text>
<rect x="1061.55" y="456.10" width="3.20" height="2.90" fill="#000"/>
<rect x="1061.55" y="466.10" width="3.20" height="2.90" fill="#000"/>
<rect x="1072.44" y="456.10" width="3.20" height="2.90" fill="#000"/>
<rect x="1072.44" y="466.10" width="3.20" height="2.90" fill="#000"/>
<text x="1080.28" y="469.00" font-size="25" fill="#000" stroke="#000" stroke-width="0.3" textLength="13.44" lengthAdjust="spacingAndGlyphs">1</text>
<text x="1596.63" y="469.00" font-size="25" fill="#000" stroke="#000" stroke-width="0.3" textLength="52.49" lengthAdjust="spacingAndGlyphs">41,1</text>
<text x="1686.56" y="469.00" font-size="25" fill="#000" stroke="#000" stroke-width="0.3" textLength="52.37" lengthAdjust="spacingAndGlyphs">10,5</text>
<text x="1775.59" y="469.00" font-size="25" fill="#000" stroke="#000" stroke-width="0.3" textLength="52.81" lengthAdjust="spacingAndGlyphs">11,4</text>
<text x="1881.20" y="469.00" font-size="25" fill="#000" stroke="#000" stroke-width="0.3" textLength="37.58" lengthAdjust="spacingAndGlyphs">0,9</text>
<circle cx="26" cy="506" r="20" fill="#93cb73"/>
<text x="18.82" y="513.00" font-size="25" fill="#000" stroke="#000" stroke-width="0.3" textLength="14.36" lengthAdjust="spacingAndGlyphs">8</text>
<text x="153.59" y="513.00" font-size="25" fill="#000" stroke="#000" stroke-width="0.3" textLength="45.19" lengthAdjust="spacingAndGlyphs">108</text>
<text x="220.55" y="513.00" font-size="25" fill="#000" stroke="#000" stroke-width="0.3" textLength="59.77" lengthAdjust="spacingAndGlyphs">2001</text>
<rect x="285.08" y="500.10" width="3.20" height="2.90" fill="#000"/>
<rect x="285.08" y="510.10" width="3.20" height="2.90" fill="#000"/>
<text x="292.67" y="513.00" font-size="25" fill="#000" stroke="#000" stroke-width="0.3" textLength="59.98" lengthAdjust="spacingAndGlyphs">4860</text>
<rect x="357.05" y="500.10" width="3.20" height="2.90" fill="#000"/>
<rect x="357.05" y="510.10" width="3.20" height="2.90" fill="#000"/>
<text x="364.69" y="513.00" font-size="25" fill="#000" stroke="#000" stroke-width="0.3" textLength="14.07" lengthAdjust="spacingAndGlyphs">0</text>
<rect x="383.22" y="500.10" width="3.20" height="2.90" fill="#000"/>
<rect x="383.22" y="510.10" width="3.20" height="2.90" fill="#000"/>
<text x="391.06" y="513.00" font-size="25" fill="#000" stroke="#000" stroke-width="0.3" textLength="13.44" lengthAdjust="spacingAndGlyphs">1</text>
<rect x="409.39" y="500.10" width="3.20" height="2.90" fill="#000"/>
<rect x="409.39" y="510.10" width="3.20" height="2.90" fill="#000"/>
<rect x="420.29" y="500.10" width="3.20" height="2.90" fill="#000"/>
<rect x="420.29" y="510.10" width="3.20" height="2.90" fill="#000"/>
<text x="427.92" y="513.00" font-size="25" fill="#000" stroke="#000" stroke-width="0.3" textLength="59.87" lengthAdjust="spacingAndGlyphs">1b5e</text>
<text x="860.45" y="513.00" font-size="25" fill="#000" stroke="#000" stroke-width="0.3" textLength="59.77" lengthAdjust="spacingAndGlyphs">2001</text>
<rect x="924.98" y="500.10" width="3.20" height="2.90" fill="#000"/>
<rect x="924.98" y="510.10" width="3.20" height="2.90" fill="#000"/>
<text x="932.57" y="513.00" font-size="25" fill="#000" stroke="#000" stroke-width="0.3" textLength="59.98" lengthAdjust="spacingAndGlyphs">4860</text>
<rect x="996.95" y="500.10" width="3.20" height="2.90" fill="#000"/>
<rect x="996.95" y="510.10" width="3.20" height="2.90" fill="#000"/>
<text x="1004.59" y="513.00" font-size="25" fill="#000" stroke="#000" stroke-width="0.3" textLength="14.07" lengthAdjust="spacingAndGlyphs">0</text>
<rect x="1023.12" y="500.10" width="3.20" height="2.90" fill="#000"/>
<rect x="1023.12" y="510.10" width="3.20" height="2.90" fill="#000"/>
<text x="1030.96" y="513.00" font-size="25" fill="#000" stroke="#000" stroke-width="0.3" textLength="13.44" lengthAdjust="spacingAndGlyphs">1</text>
<rect x="1049.29" y="500.10" width="3.20" height="2.90" fill="#000"/>
<rect x="1049.29" y="510.10" width="3.20" height="2.90" fill="#000"/>
<rect x="1060.19" y="500.10" width="3.20" height="2.90" fill="#000"/>
<rect x="1060.19" y="510.10" width="3.20" height="2.90" fill="#000"/>
<text x="1067.82" y="513.00" font-size="25" fill="#000" stroke="#000" stroke-width="0.3" textLength="59.87" lengthAdjust="spacingAndGlyphs">1b5e</text>
<text x="1596.46" y="513.00" font-size="25" fill="#000" stroke="#000" stroke-width="0.3" textLength="52.70" lengthAdjust="spacingAndGlyphs">42,7</text>
<text x="1685.79" y="513.00" font-size="25" fill="#000" stroke="#000" stroke-width="0.3" textLength="52.81" lengthAdjust="spacingAndGlyphs">15,4</text>
<text x="1776.16" y="513.00" font-size="25" fill="#000" stroke="#000" stroke-width="0.3" textLength="52.57" lengthAdjust="spacingAndGlyphs">20,5</text>
<text x="1881.02" y="513.00" font-size="25" fill="#000" stroke="#000" stroke-width="0.3" textLength="37.66" lengthAdjust="spacingAndGlyphs">2,8</text>
<circle cx="26" cy="550" r="20" fill="#93cb73"/>
<text x="18.67" y="557.00" font-size="25" fill="#000" stroke="#000" stroke-width="0.3" textLength="14.68" lengthAdjust="spacingAndGlyphs">9</text>
<text x="169.03" y="557.00" font-size="25" fill="#000" stroke="#000" stroke-width="0.3" textLength="29.73" lengthAdjust="spacingAndGlyphs">78</text>
<text x="220.55" y="557.00" font-size="25" fill="#000" stroke="#000" stroke-width="0.3" textLength="59.77" lengthAdjust="spacingAndGlyphs">2001</text>
<rect x="285.08" y="544.10" width="3.20" height="2.90" fill="#000"/>
<rect x="285.08" y="554.10" width="3.20" height="2.90" fill="#000"/>
<text x="292.67" y="557.00" font-size="25" fill="#000" stroke="#000" stroke-width="0.3" textLength="59.98" lengthAdjust="spacingAndGlyphs">4860</text>
<rect x="357.05" y="544.10" width="3.20" height="2.90" fill="#000"/>
<rect x="357.05" y="554.10" width="3.20" height="2.90" fill="#000"/>
<text x="364.69" y="557.00" font-size="25" fill="#000" stroke="#000" stroke-width="0.3" textLength="14.07" lengthAdjust="spacingAndGlyphs">0</text>
<rect x="383.22" y="544.10" width="3.20" height="2.90" fill="#000"/>
<rect x="383.22" y="554.10" width="3.20" height="2.90" fill="#000"/>
<text x="390.87" y="557.00" font-size="25" fill="#000" stroke="#000" stroke-width="0.3" textLength="59.21" lengthAdjust="spacingAndGlyphs">12e3</text>
<rect x="454.69" y="544.10" width="3.20" height="2.90" fill="#000"/>
<rect x="454.69" y="554.10" width="3.20" height="2.90" fill="#000"/>
<rect x="465.59" y="544.10" width="3.20" height="2.90" fill="#000"/>
<rect x="465.59" y="554.10" width="3.20" height="2.90" fill="#000"/>
<text x="473.17" y="557.00" font-size="25" fill="#000" stroke="#000" stroke-width="0.3" textLength="13.56" lengthAdjust="spacingAndGlyphs">2</text>
<text x="860.45" y="557.00" font-size="25" fill="#000" stroke="#000" stroke-width="0.3" textLength="59.77" lengthAdjust="spacingAndGlyphs">2001</text>
<rect x="924.98" y="544.10" width="3.20" height="2.90" fill="#000"/>
<rect x="924.98" y="554.10" width="3.20" height="2.90" fill="#000"/>
<text x="932.57" y="557.00" font-size="25" fill="#000" stroke="#000" stroke-width="0.3" textLength="59.98" lengthAdjust="spacingAndGlyphs">4860</text>
<rect x="996.95" y="544.10" width="3.20" height="2.90" fill="#000"/>
<rect x="996.95" y="554.10" width="3.20" height="2.90" fill="#000"/>
<text x="1004.59" y="557.00" font-size="25" fill="#000" stroke="#000" stroke-width="0.3" textLength="14.07" lengthAdjust="spacingAndGlyphs">0</text>
<rect x="1023.12" y="544.10" width="3.20" height="2.90" fill="#000"/>
<rect x="1023.12" y="554.10" width="3.20" height="2.90" fill="#000"/>
<text x="1030.77" y="557.00" font-size="25" fill="#000" stroke="#000" stroke-width="0.3" textLength="59.21" lengthAdjust="spacingAndGlyphs">12e3</text>
<rect x="1094.59" y="544.10" width="3.20" height="2.90" fill="#000"/>
<rect x="1094.59" y="554.10" width="3.20" height="2.90" fill="#000"/>
<rect x="1105.49" y="544.10" width="3.20" height="2.90" fill="#000"/>
<rect x="1105.49" y="554.10" width="3.20" height="2.90" fill="#000"/>
<text x="1113.07" y="557.00" font-size="25" fill="#000" stroke="#000" stroke-width="0.3" textLength="13.56" lengthAdjust="spacingAndGlyphs">2</text>
<text x="1596.01" y="557.00" font-size="25" fill="#000" stroke="#000" stroke-width="0.3" textLength="52.58" lengthAdjust="spacingAndGlyphs">32,4</text>
<text x="1686.36" y="557.00" font-size="25" fill="#000" stroke="#000" stroke-width="0.3" textLength="52.57" lengthAdjust="spacingAndGlyphs">20,5</text>
<text x="1816.44" y="557.00" font-size="25" fill="#000" stroke="#000" stroke-width="0.3" textLength="11.62" lengthAdjust="spacingAndGlyphs">*</text>
<text x="1865.38" y="557.00" font-size="25" fill="#000" stroke="#000" stroke-width="0.3" textLength="53.18" lengthAdjust="spacingAndGlyphs">91,0</text>
<rect x="6.00" y="574.00" width="55.00" height="40.00" fill="#93cb73" rx="20" ry="20"/>
<text x="18.18" y="601.00" font-size="25" fill="#000" stroke="#000" stroke-width="0.3" textLength="29.64" lengthAdjust="spacingAndGlyphs">10</text>
<text x="154.02" y="601.00" font-size="25" fill="#000" stroke="#000" stroke-width="0.3" textLength="44.94" lengthAdjust="spacingAndGlyphs">107</text>
<text x="220.55" y="601.00" font-size="25" fill="#000" stroke="#000" stroke-width="0.3" textLength="59.77" lengthAdjust="spacingAndGlyphs">2001</text>
<rect x="285.08" y="588.10" width="3.20" height="2.90" fill="#000"/>
<rect x="285.08" y="598.10" width="3.20" height="2.90" fill="#000"/>
<text x="292.67" y="601.00" font-size="25" fill="#000" stroke="#000" stroke-width="0.3" textLength="59.98" lengthAdjust="spacingAndGlyphs">4860</text>
<rect x="357.05" y="588.10" width="3.20" height="2.90" fill="#000"/>
<rect x="357.05" y="598.10" width="3.20" height="2.90" fill="#000"/>
<rect x="367.95" y="588.10" width="3.20" height="2.90" fill="#000"/>
<rect x="367.95" y="598.10" width="3.20" height="2.90" fill="#000"/>
<text x="375.29" y="601.00" font-size="25" fill="#000" stroke="#000" stroke-width="0.3" textLength="12.04" lengthAdjust="spacingAndGlyphs">c</text>
<rect x="392.04" y="588.10" width="3.20" height="2.90" fill="#000"/>
<rect x="392.04" y="598.10" width="3.20" height="2.90" fill="#000"/>
<text x="399.64" y="601.00" font-size="25" fill="#000" stroke="#000" stroke-width="0.3" textLength="59.61" lengthAdjust="spacingAndGlyphs">4001</text>
<rect x="464.02" y="588.10" width="3.20" height="2.90" fill="#000"/>
<rect x="464.02" y="598.10" width="3.20" height="2.90" fill="#000"/>
<text x="471.26" y="601.00" font-size="25" fill="#000" stroke="#000" stroke-width="0.3" textLength="42.68" lengthAdjust="spacingAndGlyphs">ec6</text>
<text x="860.45" y="601.00" font-size="25" fill="#000" stroke="#000" stroke-width="0.3" textLength="59.77" lengthAdjust="spacingAndGlyphs">2001</text>
<rect x="924.98" y="588.10" width="3.20" height="2.90" fill="#000"/>
<rect x="924.98" y="598.10" width="3.20" height="2.90" fill="#000"/>
<text x="932.57" y="601.00" font-size="25" fill="#000" stroke="#000" stroke-width="0.3" textLength="59.98" lengthAdjust="spacingAndGlyphs">4860</text>
<rect x="996.95" y="588.10" width="3.20" height="2.90" fill="#000"/>
<rect x="996.95" y="598.10" width="3.20" height="2.90" fill="#000"/>
<rect x="1007.85" y="588.10" width="3.20" height="2.90" fill="#000"/>
<rect x="1007.85" y="598.10" width="3.20" height="2.90" fill="#000"/>
<text x="1015.19" y="601.00" font-size="25" fill="#000" stroke="#000" stroke-width="0.3" textLength="12.04" lengthAdjust="spacingAndGlyphs">c</text>
<rect x="1031.94" y="588.10" width="3.20" height="2.90" fill="#000"/>
<rect x="1031.94" y="598.10" width="3.20" height="2.90" fill="#000"/>
<text x="1039.54" y="601.00" font-size="25" fill="#000" stroke="#000" stroke-width="0.3" textLength="59.61" lengthAdjust="spacingAndGlyphs">4001</text>
<rect x="1103.92" y="588.10" width="3.20" height="2.90" fill="#000"/>
<rect x="1103.92" y="598.10" width="3.20" height="2.90" fill="#000"/>
<text x="1111.16" y="601.00" font-size="25" fill="#000" stroke="#000" stroke-width="0.3" textLength="42.68" lengthAdjust="spacingAndGlyphs">ec6</text>
<text x="1597.08" y="601.00" font-size="25" fill="#000" stroke="#000" stroke-width="0.3" textLength="52.06" lengthAdjust="spacingAndGlyphs">35,2</text>
<text x="1686.68" y="601.00" font-size="25" fill="#000" stroke="#000" stroke-width="0.3" textLength="52.44" lengthAdjust="spacingAndGlyphs">12,1</text>
<text x="1760.45" y="601.00" font-size="25" fill="#000" stroke="#000" stroke-width="0.3" textLength="68.34" lengthAdjust="spacingAndGlyphs">141,8</text>
<text x="1881.26" y="601.00" font-size="25" fill="#000" stroke="#000" stroke-width="0.3" textLength="37.52" lengthAdjust="spacingAndGlyphs">1,9</text>
<rect x="6.00" y="618.00" width="55.00" height="40.00" fill="#93cb73" rx="20" ry="20"/>
<text x="18.53" y="645.00" font-size="25" fill="#000" stroke="#000" stroke-width="0.3" textLength="29.23" lengthAdjust="spacingAndGlyphs">11</text>
<text x="154.02" y="645.00" font-size="25" fill="#000" stroke="#000" stroke-width="0.3" textLength="44.94" lengthAdjust="spacingAndGlyphs">107</text>
<text x="220.55" y="645.00" font-size="25" fill="#000" stroke="#000" stroke-width="0.3" textLength="59.77" lengthAdjust="spacingAndGlyphs">2001</text>
<rect x="285.08" y="632.10" width="3.20" height="2.90" fill="#000"/>
<rect x="285.08" y="642.10" width="3.20" height="2.90" fill="#000"/>
<text x="292.67" y="645.00" font-size="25" fill="#000" stroke="#000" stroke-width="0.3" textLength="59.98" lengthAdjust="spacingAndGlyphs">4860</text>
<rect x="357.05" y="632.10" width="3.20" height="2.90" fill="#000"/>
<rect x="357.05" y="642.10" width="3.20" height="2.90" fill="#000"/>
<rect x="367.95" y="632.10" width="3.20" height="2.90" fill="#000"/>
<rect x="367.95" y="642.10" width="3.20" height="2.90" fill="#000"/>
<text x="375.51" y="645.00" font-size="25" fill="#000" stroke="#000" stroke-width="0.3" textLength="14.22" lengthAdjust="spacingAndGlyphs">8</text>
<rect x="394.12" y="632.10" width="3.20" height="2.90" fill="#000"/>
<rect x="394.12" y="642.10" width="3.20" height="2.90" fill="#000"/>
<text x="401.71" y="645.00" font-size="25" fill="#000" stroke="#000" stroke-width="0.3" textLength="59.98" lengthAdjust="spacingAndGlyphs">4000</text>
<rect x="466.09" y="632.10" width="3.20" height="2.90" fill="#000"/>
<rect x="466.09" y="642.10" width="3.20" height="2.90" fill="#000"/>
<text x="473.30" y="645.00" font-size="25" fill="#000" stroke="#000" stroke-width="0.3" textLength="53.38" lengthAdjust="spacingAndGlyphs">f433</text>
<text x="860.45" y="645.00" font-size="25" fill="#000" stroke="#000" stroke-width="0.3" textLength="59.77" lengthAdjust="spacingAndGlyphs">2001</text>
<rect x="924.98" y="632.10" width="3.20" height="2.90" fill="#000"/>
<rect x="924.98" y="642.10" width="3.20" height="2.90" fill="#000"/>
<text x="932.57" y="645.00" font-size="25" fill="#000" stroke="#000" stroke-width="0.3" textLength="59.98" lengthAdjust="spacingAndGlyphs">4860</text>
<rect x="996.95" y="632.10" width="3.20" height="2.90" fill="#000"/>
<rect x="996.95" y="642.10" width="3.20" height="2.90" fill="#000"/>
<rect x="1007.85" y="632.10" width="3.20" height="2.90" fill="#000"/>
<rect x="1007.85" y="642.10" width="3.20" height="2.90" fill="#000"/>
<text x="1015.41" y="645.00" font-size="25" fill="#000" stroke="#000" stroke-width="0.3" textLength="14.22" lengthAdjust="spacingAndGlyphs">8</text>
<rect x="1034.02" y="632.10" width="3.20" height="2.90" fill="#000"/>
<rect x="1034.02" y="642.10" width="3.20" height="2.90" fill="#000"/>
<text x="1041.61" y="645.00" font-size="25" fill="#000" stroke="#000" stroke-width="0.3" textLength="59.98" lengthAdjust="spacingAndGlyphs">4000</text>
<rect x="1105.99" y="632.10" width="3.20" height="2.90" fill="#000"/>
<rect x="1105.99" y="642.10" width="3.20" height="2.90" fill="#000"/>
<text x="1113.20" y="645.00" font-size="25" fill="#000" stroke="#000" stroke-width="0.3" textLength="53.38" lengthAdjust="spacingAndGlyphs">f433</text>
<text x="1596.63" y="645.00" font-size="25" fill="#000" stroke="#000" stroke-width="0.3" textLength="52.49" lengthAdjust="spacingAndGlyphs">43,1</text>
<text x="1686.50" y="645.00" font-size="25" fill="#000" stroke="#000" stroke-width="0.3" textLength="52.66" lengthAdjust="spacingAndGlyphs">16,7</text>
<text x="1775.95" y="645.00" font-size="25" fill="#000" stroke="#000" stroke-width="0.3" textLength="53.02" lengthAdjust="spacingAndGlyphs">95,7</text>
<text x="1881.85" y="645.00" font-size="25" fill="#000" stroke="#000" stroke-width="0.3" textLength="36.98" lengthAdjust="spacingAndGlyphs">3,7</text>
<rect x="6.00" y="662.00" width="55.00" height="40.00" fill="#93cb73" rx="20" ry="20"/>
<text x="18.63" y="689.00" font-size="25" fill="#000" stroke="#000" stroke-width="0.3" textLength="29.06" lengthAdjust="spacingAndGlyphs">12</text>
<text x="153.45" y="689.00" font-size="25" fill="#000" stroke="#000" stroke-width="0.3" textLength="45.34" lengthAdjust="spacingAndGlyphs">106</text>
<text x="220.55" y="689.00" font-size="25" fill="#000" stroke="#000" stroke-width="0.3" textLength="59.77" lengthAdjust="spacingAndGlyphs">2001</text>
<rect x="285.08" y="676.10" width="3.20" height="2.90" fill="#000"/>
<rect x="285.08" y="686.10" width="3.20" height="2.90" fill="#000"/>
<text x="292.67" y="689.00" font-size="25" fill="#000" stroke="#000" stroke-width="0.3" textLength="59.98" lengthAdjust="spacingAndGlyphs">4860</text>
<rect x="357.05" y="676.10" width="3.20" height="2.90" fill="#000"/>
<rect x="357.05" y="686.10" width="3.20" height="2.90" fill="#000"/>
<rect x="367.95" y="676.10" width="3.20" height="2.90" fill="#000"/>
<rect x="367.95" y="686.10" width="3.20" height="2.90" fill="#000"/>
<text x="375.29" y="689.00" font-size="25" fill="#000" stroke="#000" stroke-width="0.3" textLength="12.04" lengthAdjust="spacingAndGlyphs">c</text>
<rect x="392.04" y="676.10" width="3.20" height="2.90" fill="#000"/>
<rect x="392.04" y="686.10" width="3.20" height="2.90" fill="#000"/>
<text x="399.64" y="689.00" font-size="25" fill="#000" stroke="#000" stroke-width="0.3" textLength="59.61" lengthAdjust="spacingAndGlyphs">4001</text>
<rect x="464.02" y="676.10" width="3.20" height="2.90" fill="#000"/>
<rect x="464.02" y="686.10" width="3.20" height="2.90" fill="#000"/>
<text x="471.84" y="689.00" font-size="25" fill="#000" stroke="#000" stroke-width="0.3" textLength="59.83" lengthAdjust="spacingAndGlyphs">5638</text>
<text x="860.45" y="689.00" font-size="25" fill="#000" stroke="#000" stroke-width="0.3" textLength="59.77" lengthAdjust="spacingAndGlyphs">2001</text>
<rect x="924.98" y="676.10" width="3.20" height="2.90" fill="#000"/>
<rect x="924.98" y="686.10" width="3.20" height="2.90" fill="#000"/>
<text x="932.57" y="689.00" font-size="25" fill="#000" stroke="#000" stroke-width="0.3" textLength="59.98" lengthAdjust="spacingAndGlyphs">4860</text>
<rect x="996.95" y="676.10" width="3.20" height="2.90" fill="#000"/>
<rect x="996.95" y="686.10" width="3.20" height="2.90" fill="#000"/>
<rect x="1007.85" y="676.10" width="3.20" height="2.90" fill="#000"/>
<rect x="1007.85" y="686.10" width="3.20" height="2.90" fill="#000"/>
<text x="1015.19" y="689.00" font-size="25" fill="#000" stroke="#000" stroke-width="0.3" textLength="12.04" lengthAdjust="spacingAndGlyphs">c</text>
<rect x="1031.94" y="676.10" width="3.20" height="2.90" fill="#000"/>
<rect x="1031.94" y="686.10" width="3.20" height="2.90" fill="#000"/>
<text x="1039.54" y="689.00" font-size="25" fill="#000" stroke="#000" stroke-width="0.3" textLength="59.61" lengthAdjust="spacingAndGlyphs">4001</text>
<rect x="1103.92" y="676.10" width="3.20" height="2.90" fill="#000"/>
<rect x="1103.92" y="686.10" width="3.20" height="2.90" fill="#000"/>
<text x="1111.74" y="689.00" font-size="25" fill="#000" stroke="#000" stroke-width="0.3" textLength="59.83" lengthAdjust="spacingAndGlyphs">5638</text>
<text x="1596.51" y="689.00" font-size="25" fill="#000" stroke="#000" stroke-width="0.3" textLength="52.42" lengthAdjust="spacingAndGlyphs">42,5</text>
<text x="1685.75" y="689.00" font-size="25" fill="#000" stroke="#000" stroke-width="0.3" textLength="53.25" lengthAdjust="spacingAndGlyphs">25,6</text>
<text x="1776.66" y="689.00" font-size="25" fill="#000" stroke="#000" stroke-width="0.3" textLength="52.25" lengthAdjust="spacingAndGlyphs">56,1</text>
<text x="1881.43" y="689.00" font-size="25" fill="#000" stroke="#000" stroke-width="0.3" textLength="37.23" lengthAdjust="spacingAndGlyphs">3,8</text>
<rect x="6.00" y="706.00" width="55.00" height="40.00" fill="#93cb73" rx="20" ry="20"/>
<text x="18.37" y="733.00" font-size="25" fill="#000" stroke="#000" stroke-width="0.3" textLength="29.42" lengthAdjust="spacingAndGlyphs">13</text>
<text x="154.19" y="733.00" font-size="25" fill="#000" stroke="#000" stroke-width="0.3" textLength="44.72" lengthAdjust="spacingAndGlyphs">101</text>
<text x="220.55" y="733.00" font-size="25" fill="#000" stroke="#000" stroke-width="0.3" textLength="59.77" lengthAdjust="spacingAndGlyphs">2001</text>
<rect x="285.08" y="720.10" width="3.20" height="2.90" fill="#000"/>
<rect x="285.08" y="730.10" width="3.20" height="2.90" fill="#000"/>
<text x="292.67" y="733.00" font-size="25" fill="#000" stroke="#000" stroke-width="0.3" textLength="59.98" lengthAdjust="spacingAndGlyphs">4860</text>
<rect x="357.05" y="720.10" width="3.20" height="2.90" fill="#000"/>
<rect x="357.05" y="730.10" width="3.20" height="2.90" fill="#000"/>
<rect x="367.95" y="720.10" width="3.20" height="2.90" fill="#000"/>
<rect x="367.95" y="730.10" width="3.20" height="2.90" fill="#000"/>
<text x="375.28" y="733.00" font-size="25" fill="#000" stroke="#000" stroke-width="0.3" textLength="14.53" lengthAdjust="spacingAndGlyphs">9</text>
<rect x="394.12" y="720.10" width="3.20" height="2.90" fill="#000"/>
<rect x="394.12" y="730.10" width="3.20" height="2.90" fill="#000"/>
<text x="401.71" y="733.00" font-size="25" fill="#000" stroke="#000" stroke-width="0.3" textLength="59.98" lengthAdjust="spacingAndGlyphs">4000</text>
<rect x="466.09" y="720.10" width="3.20" height="2.90" fill="#000"/>
<rect x="466.09" y="730.10" width="3.20" height="2.90" fill="#000"/>
<text x="473.30" y="733.00" font-size="25" fill="#000" stroke="#000" stroke-width="0.3" textLength="51.71" lengthAdjust="spacingAndGlyphs">cf86</text>
<text x="860.45" y="733.00" font-size="25" fill="#000" stroke="#000" stroke-width="0.3" textLength="59.77" lengthAdjust="spacingAndGlyphs">2001</text>
<rect x="924.98" y="720.10" width="3.20" height="2.90" fill="#000"/>
<rect x="924.98" y="730.10" width="3.20" height="2.90" fill="#000"/>
<text x="932.57" y="733.00" font-size="25" fill="#000" stroke="#000" stroke-width="0.3" textLength="59.98" lengthAdjust="spacingAndGlyphs">4860</text>
<rect x="996.95" y="720.10" width="3.20" height="2.90" fill="#000"/>
<rect x="996.95" y="730.10" width="3.20" height="2.90" fill="#000"/>
<rect x="1007.85" y="720.10" width="3.20" height="2.90" fill="#000"/>
<rect x="1007.85" y="730.10" width="3.20" height="2.90" fill="#000"/>
<text x="1015.18" y="733.00" font-size="25" fill="#000" stroke="#000" stroke-width="0.3" textLength="14.53" lengthAdjust="spacingAndGlyphs">9</text>
<rect x="1034.02" y="720.10" width="3.20" height="2.90" fill="#000"/>
<rect x="1034.02" y="730.10" width="3.20" height="2.90" fill="#000"/>
<text x="1041.61" y="733.00" font-size="25" fill="#000" stroke="#000" stroke-width="0.3" textLength="59.98" lengthAdjust="spacingAndGlyphs">4000</text>
<rect x="1105.99" y="720.10" width="3.20" height="2.90" fill="#000"/>
<rect x="1105.99" y="730.10" width="3.20" height="2.90" fill="#000"/>
<text x="1113.20" y="733.00" font-size="25" fill="#000" stroke="#000" stroke-width="0.3" textLength="51.71" lengthAdjust="spacingAndGlyphs">cf86</text>
<text x="1596.32" y="733.00" font-size="25" fill="#000" stroke="#000" stroke-width="0.3" textLength="52.77" lengthAdjust="spacingAndGlyphs">54,9</text>
<text x="1686.25" y="733.00" font-size="25" fill="#000" stroke="#000" stroke-width="0.3" textLength="52.60" lengthAdjust="spacingAndGlyphs">31,0</text>
<text x="1816.44" y="733.00" font-size="25" fill="#000" stroke="#000" stroke-width="0.3" textLength="11.62" lengthAdjust="spacingAndGlyphs">*</text>
<text x="1866.02" y="733.00" font-size="25" fill="#000" stroke="#000" stroke-width="0.3" textLength="52.80" lengthAdjust="spacingAndGlyphs">90,1</text>
<rect x="6.00" y="750.00" width="55.00" height="40.00" fill="#93cb73" rx="20" ry="20"/>
<text x="18.06" y="777.00" font-size="25" fill="#000" stroke="#000" stroke-width="0.3" textLength="29.63" lengthAdjust="spacingAndGlyphs">14</text>
<text x="153.59" y="777.00" font-size="25" fill="#000" stroke="#000" stroke-width="0.3" textLength="45.19" lengthAdjust="spacingAndGlyphs">108</text>
<text x="220.55" y="777.00" font-size="25" fill="#000" stroke="#000" stroke-width="0.3" textLength="59.77" lengthAdjust="spacingAndGlyphs">2001</text>
<rect x="285.08" y="764.10" width="3.20" height="2.90" fill="#000"/>
<rect x="285.08" y="774.10" width="3.20" height="2.90" fill="#000"/>
<text x="292.67" y="777.00" font-size="25" fill="#000" stroke="#000" stroke-width="0.3" textLength="59.98" lengthAdjust="spacingAndGlyphs">4860</text>
<rect x="357.05" y="764.10" width="3.20" height="2.90" fill="#000"/>
<rect x="357.05" y="774.10" width="3.20" height="2.90" fill="#000"/>
<text x="364.69" y="777.00" font-size="25" fill="#000" stroke="#000" stroke-width="0.3" textLength="14.07" lengthAdjust="spacingAndGlyphs">0</text>
<rect x="383.22" y="764.10" width="3.20" height="2.90" fill="#000"/>
<rect x="383.22" y="774.10" width="3.20" height="2.90" fill="#000"/>
<text x="391.06" y="777.00" font-size="25" fill="#000" stroke="#000" stroke-width="0.3" textLength="13.44" lengthAdjust="spacingAndGlyphs">1</text>
<rect x="409.39" y="764.10" width="3.20" height="2.90" fill="#000"/>
<rect x="409.39" y="774.10" width="3.20" height="2.90" fill="#000"/>
<rect x="420.29" y="764.10" width="3.20" height="2.90" fill="#000"/>
<rect x="420.29" y="774.10" width="3.20" height="2.90" fill="#000"/>
<text x="427.88" y="777.00" font-size="25" fill="#000" stroke="#000" stroke-width="0.3" textLength="60.32" lengthAdjust="spacingAndGlyphs">400b</text>
<text x="860.45" y="777.00" font-size="25" fill="#000" stroke="#000" stroke-width="0.3" textLength="59.77" lengthAdjust="spacingAndGlyphs">2001</text>
<rect x="924.98" y="764.10" width="3.20" height="2.90" fill="#000"/>
<rect x="924.98" y="774.10" width="3.20" height="2.90" fill="#000"/>
<text x="932.57" y="777.00" font-size="25" fill="#000" stroke="#000" stroke-width="0.3" textLength="59.98" lengthAdjust="spacingAndGlyphs">4860</text>
<rect x="996.95" y="764.10" width="3.20" height="2.90" fill="#000"/>
<rect x="996.95" y="774.10" width="3.20" height="2.90" fill="#000"/>
<text x="1004.59" y="777.00" font-size="25" fill="#000" stroke="#000" stroke-width="0.3" textLength="14.07" lengthAdjust="spacingAndGlyphs">0</text>
<rect x="1023.12" y="764.10" width="3.20" height="2.90" fill="#000"/>
<rect x="1023.12" y="774.10" width="3.20" height="2.90" fill="#000"/>
<text x="1030.96" y="777.00" font-size="25" fill="#000" stroke="#000" stroke-width="0.3" textLength="13.44" lengthAdjust="spacingAndGlyphs">1</text>
<rect x="1049.29" y="764.10" width="3.20" height="2.90" fill="#000"/>
<rect x="1049.29" y="774.10" width="3.20" height="2.90" fill="#000"/>
<rect x="1060.19" y="764.10" width="3.20" height="2.90" fill="#000"/>
<rect x="1060.19" y="774.10" width="3.20" height="2.90" fill="#000"/>
<text x="1067.78" y="777.00" font-size="25" fill="#000" stroke="#000" stroke-width="0.3" textLength="60.32" lengthAdjust="spacingAndGlyphs">400b</text>
<text x="1596.00" y="777.00" font-size="25" fill="#000" stroke="#000" stroke-width="0.3" textLength="52.86" lengthAdjust="spacingAndGlyphs">40,0</text>
<text x="1685.84" y="777.00" font-size="25" fill="#000" stroke="#000" stroke-width="0.3" textLength="53.02" lengthAdjust="spacingAndGlyphs">24,0</text>
<text x="1775.81" y="777.00" font-size="25" fill="#000" stroke="#000" stroke-width="0.3" textLength="52.58" lengthAdjust="spacingAndGlyphs">30,4</text>
<text x="1881.37" y="777.00" font-size="25" fill="#000" stroke="#000" stroke-width="0.3" textLength="37.31" lengthAdjust="spacingAndGlyphs">8,3</text>
<rect x="6.00" y="794.00" width="55.00" height="40.00" fill="#93cb73" rx="20" ry="20"/>
<text x="18.47" y="821.00" font-size="25" fill="#000" stroke="#000" stroke-width="0.3" textLength="29.16" lengthAdjust="spacingAndGlyphs">15</text>
<text x="153.44" y="821.00" font-size="25" fill="#000" stroke="#000" stroke-width="0.3" textLength="45.45" lengthAdjust="spacingAndGlyphs">229</text>
<text x="220.55" y="821.00" font-size="25" fill="#000" stroke="#000" stroke-width="0.3" textLength="59.56" lengthAdjust="spacingAndGlyphs">2a00</text>
<rect x="284.51" y="808.10" width="3.20" height="2.90" fill="#000"/>
<rect x="284.51" y="818.10" width="3.20" height="2.90" fill="#000"/>
<text x="292.14" y="821.00" font-size="25" fill="#000" stroke="#000" stroke-width="0.3" textLength="59.95" lengthAdjust="spacingAndGlyphs">1450</text>
<rect x="356.49" y="808.10" width="3.20" height="2.90" fill="#000"/>
<rect x="356.49" y="818.10" width="3.20" height="2.90" fill="#000"/>
<text x="364.08" y="821.00" font-size="25" fill="#000" stroke="#000" stroke-width="0.3" textLength="60.20" lengthAdjust="spacingAndGlyphs">4016</text>
<rect x="428.47" y="808.10" width="3.20" height="2.90" fill="#000"/>
<rect x="428.47" y="818.10" width="3.20" height="2.90" fill="#000"/>
<text x="435.96" y="821.00" font-size="25" fill="#000" stroke="#000" stroke-width="0.3" textLength="45.14" lengthAdjust="spacingAndGlyphs">80b</text>
<rect x="485.14" y="808.10" width="3.20" height="2.90" fill="#000"/>
<rect x="485.14" y="818.10" width="3.20" height="2.90" fill="#000"/>
<rect x="496.04" y="808.10" width="3.20" height="2.90" fill="#000"/>
<rect x="496.04" y="818.10" width="3.20" height="2.90" fill="#000"/>
<text x="503.48" y="821.00" font-size="25" fill="#000" stroke="#000" stroke-width="0.3" textLength="59.94" lengthAdjust="spacingAndGlyphs">2003</text>
<text x="861.84" y="821.00" font-size="25" fill="#000" stroke="#000" stroke-width="0.3" textLength="184.29" lengthAdjust="spacingAndGlyphs">www.google.de</text>
<text x="1596.25" y="821.00" font-size="25" fill="#000" stroke="#000" stroke-width="0.3" textLength="52.60" lengthAdjust="spacingAndGlyphs">34,0</text>
<text x="1686.56" y="821.00" font-size="25" fill="#000" stroke="#000" stroke-width="0.3" textLength="52.37" lengthAdjust="spacingAndGlyphs">11,5</text>
<text x="1776.88" y="821.00" font-size="25" fill="#000" stroke="#000" stroke-width="0.3" textLength="52.06" lengthAdjust="spacingAndGlyphs">33,2</text>
<text x="1881.83" y="821.00" font-size="25" fill="#000" stroke="#000" stroke-width="0.3" textLength="37.01" lengthAdjust="spacingAndGlyphs">5,7</text>
<rect x="1931.00" y="183.00" width="7.70" height="30" fill="#ffc0c0" stroke="#dfa5a5" stroke-width="2"/>
<rect x="1931.00" y="227.00" width="95.60" height="30" fill="#ffc0c0" stroke="#dfa5a5" stroke-width="2"/>
<rect x="1931.00" y="271.00" width="667.00" height="30" fill="#ffc0c0" stroke="#dfa5a5" stroke-width="2"/>
<rect x="1931.00" y="315.00" width="667.00" height="30" fill="#ffc0c0" stroke="#dfa5a5" stroke-width="2"/>
<rect x="1931.00" y="359.00" width="667.00" height="30" fill="#ffc0c0" stroke="#dfa5a5" stroke-width="2"/>
<rect x="1931.00" y="403.00" width="104.00" height="30" fill="#ffc0c0" stroke="#dfa5a5" stroke-width="2"/>
<rect x="1931.00" y="447.00" width="17.80" height="30" fill="#ffc0c0" stroke="#dfa5a5" stroke-width="2"/>
<rect x="1931.00" y="491.00" width="58.50" height="30" fill="#ffc0c0" stroke="#dfa5a5" stroke-width="2"/>
<rect x="1931.00" y="535.00" width="667.00" height="30" fill="#ffc0c0" stroke="#dfa5a5" stroke-width="2"/>
<rect x="1931.00" y="579.00" width="38.90" height="30" fill="#ffc0c0" stroke="#dfa5a5" stroke-width="2"/>
<rect x="1931.00" y="623.00" width="80.50" height="30" fill="#ffc0c0" stroke="#dfa5a5" stroke-width="2"/>
<rect x="1931.00" y="667.00" width="81.00" height="30" fill="#ffc0c0" stroke="#dfa5a5" stroke-width="2"/>
<rect x="1931.00" y="711.00" width="667.00" height="30" fill="#ffc0c0" stroke="#dfa5a5" stroke-width="2"/>
<rect x="1931.00" y="755.00" width="183.00" height="30" fill="#ffc0c0" stroke="#dfa5a5" stroke-width="2"/>
<rect x="1931.00" y="799.00" width="123.70" height="30" fill="#ffc0c0" stroke="#dfa5a5" stroke-width="2"/>
<line x1="1940.08" y1="197.00" x2="1945.80" y2="197.00" stroke="#4a4a4a" stroke-width="2" />
<line x1="1940.08" y1="189.00" x2="1940.08" y2="205.00" stroke="#4a4a4a" stroke-width="2" />
<line x1="1945.80" y1="189.00" x2="1945.80" y2="205.00" stroke="#4a4a4a" stroke-width="2" />
<line x1="1959.35" y1="241.00" x2="2365.80" y2="241.00" stroke="#4a4a4a" stroke-width="2" />
<line x1="1959.35" y1="233.00" x2="1959.35" y2="249.00" stroke="#4a4a4a" stroke-width="2" />
<line x1="2365.80" y1="233.00" x2="2365.80" y2="249.00" stroke="#4a4a4a" stroke-width="2" />
<line x1="1976.54" y1="285.00" x2="2300.10" y2="285.00" stroke="#4a4a4a" stroke-width="2" />
<line x1="1976.54" y1="277.00" x2="1976.54" y2="293.00" stroke="#4a4a4a" stroke-width="2" />
<line x1="2300.10" y1="277.00" x2="2300.10" y2="293.00" stroke="#4a4a4a" stroke-width="2" />
<line x1="2009.09" y1="329.00" x2="2356.10" y2="329.00" stroke="#4a4a4a" stroke-width="2" />
<line x1="2009.09" y1="321.00" x2="2009.09" y2="337.00" stroke="#4a4a4a" stroke-width="2" />
<line x1="2356.10" y1="321.00" x2="2356.10" y2="337.00" stroke="#4a4a4a" stroke-width="2" />
<line x1="1988.26" y1="373.00" x2="2072.00" y2="373.00" stroke="#4a4a4a" stroke-width="2" />
<line x1="1988.26" y1="365.00" x2="1988.26" y2="381.00" stroke="#4a4a4a" stroke-width="2" />
<line x1="2072.00" y1="365.00" x2="2072.00" y2="381.00" stroke="#4a4a4a" stroke-width="2" />
<line x1="1962.74" y1="417.00" x2="2590.10" y2="417.00" stroke="#4a4a4a" stroke-width="2" />
<line x1="1962.74" y1="409.00" x2="1962.74" y2="425.00" stroke="#4a4a4a" stroke-width="2" />
<line x1="2590.10" y1="409.00" x2="2590.10" y2="425.00" stroke="#4a4a4a" stroke-width="2" />
<line x1="1965.34" y1="461.00" x2="2457.90" y2="461.00" stroke="#4a4a4a" stroke-width="2" />
<line x1="1965.34" y1="453.00" x2="1965.34" y2="469.00" stroke="#4a4a4a" stroke-width="2" />
<line x1="2457.90" y1="453.00" x2="2457.90" y2="469.00" stroke="#4a4a4a" stroke-width="2" />
<line x1="1978.10" y1="505.00" x2="2410.00" y2="505.00" stroke="#4a4a4a" stroke-width="2" />
<line x1="1978.10" y1="497.00" x2="1978.10" y2="513.00" stroke="#4a4a4a" stroke-width="2" />
<line x1="2410.00" y1="497.00" x2="2410.00" y2="513.00" stroke="#4a4a4a" stroke-width="2" />
<line x1="1991.38" y1="549.00" x2="2076.00" y2="549.00" stroke="#4a4a4a" stroke-width="2" />
<line x1="1991.38" y1="541.00" x2="1991.38" y2="557.00" stroke="#4a4a4a" stroke-width="2" />
<line x1="2076.00" y1="541.00" x2="2076.00" y2="557.00" stroke="#4a4a4a" stroke-width="2" />
<line x1="1969.51" y1="593.00" x2="2451.80" y2="593.00" stroke="#4a4a4a" stroke-width="2" />
<line x1="1969.51" y1="585.00" x2="1969.51" y2="601.00" stroke="#4a4a4a" stroke-width="2" />
<line x1="2451.80" y1="585.00" x2="2451.80" y2="601.00" stroke="#4a4a4a" stroke-width="2" />
<line x1="1981.49" y1="637.00" x2="2429.90" y2="637.00" stroke="#4a4a4a" stroke-width="2" />
<line x1="1981.49" y1="629.00" x2="1981.49" y2="645.00" stroke="#4a4a4a" stroke-width="2" />
<line x1="2429.90" y1="629.00" x2="2429.90" y2="645.00" stroke="#4a4a4a" stroke-width="2" />
<line x1="2004.66" y1="681.00" x2="2364.00" y2="681.00" stroke="#4a4a4a" stroke-width="2" />
<line x1="2004.66" y1="673.00" x2="2004.66" y2="689.00" stroke="#4a4a4a" stroke-width="2" />
<line x1="2364.00" y1="673.00" x2="2364.00" y2="689.00" stroke="#4a4a4a" stroke-width="2" />
<line x1="2018.72" y1="725.00" x2="2468.00" y2="725.00" stroke="#4a4a4a" stroke-width="2" />
<line x1="2018.72" y1="717.00" x2="2018.72" y2="733.00" stroke="#4a4a4a" stroke-width="2" />
<line x1="2468.00" y1="717.00" x2="2468.00" y2="733.00" stroke="#4a4a4a" stroke-width="2" />
<line x1="2000.50" y1="769.00" x2="2349.80" y2="769.00" stroke="#4a4a4a" stroke-width="2" />
<line x1="2000.50" y1="761.00" x2="2000.50" y2="777.00" stroke="#4a4a4a" stroke-width="2" />
<line x1="2349.80" y1="761.00" x2="2349.80" y2="777.00" stroke="#4a4a4a" stroke-width="2" />
<line x1="1967.95" y1="813.00" x2="2306.00" y2="813.00" stroke="#4a4a4a" stroke-width="2" />
<line x1="1967.95" y1="805.00" x2="1967.95" y2="821.00" stroke="#4a4a4a" stroke-width="2" />
<line x1="2306.00" y1="805.00" x2="2306.00" y2="821.00" stroke="#4a4a4a" stroke-width="2" />
<path d="M1950.44,201.96L2003.68,236.04M2009.88,250.07L2005.44,275.93M2012.81,287.20L2173.32,326.80M2173.36,331.36L2025.53,370.64M2024.37,377.99L2077.13,412.01M2078.69,423.82L2051.20,454.18M2045.89,470.16L2048.32,495.84M2044.40,512.86L2027.16,541.14M2023.87,558.08L2028.16,583.92M2033.56,601.33L2046.34,628.67M2049.91,646.19L2049.00,671.81M2054.11,688.42L2075.52,717.58M2074.87,731.90L2048.24,762.10M2039.08,777.67L2029.61,804.33" fill="none" stroke="#ff2020" stroke-width="2.2"/>
<circle cx="1942.69" cy="197" r="8.5" fill="none" stroke="#ff2020" stroke-width="2.2"/>
<path d="M1931.58,188.50L1948.58,205.50M1931.58,205.50L1948.58,188.50" stroke="#2020ff" stroke-width="2.2" fill="none"/>
<circle cx="2011.43" cy="241" r="8.5" fill="none" stroke="#ff2020" stroke-width="2.2"/>
<path d="M1973.77,232.50L1990.77,249.50M1973.77,249.50L1990.77,232.50" stroke="#2020ff" stroke-width="2.2" fill="none"/>
<circle cx="2003.88" cy="285" r="8.5" fill="none" stroke="#ff2020" stroke-width="2.2"/>
<circle cx="2182.26" cy="329" r="8.5" fill="none" stroke="#ff2020" stroke-width="2.2"/>
<circle cx="2016.64" cy="373" r="8.5" fill="none" stroke="#ff2020" stroke-width="2.2"/>
<circle cx="2084.87" cy="417" r="8.5" fill="none" stroke="#ff2020" stroke-width="2.2"/>
<path d="M2032.88,408.50L2049.88,425.50M2032.88,425.50L2049.88,408.50" stroke="#2020ff" stroke-width="2.2" fill="none"/>
<circle cx="2045.02" cy="461" r="8.5" fill="none" stroke="#ff2020" stroke-width="2.2"/>
<path d="M1959.19,452.50L1976.19,469.50M1959.19,469.50L1976.19,452.50" stroke="#2020ff" stroke-width="2.2" fill="none"/>
<circle cx="2049.19" cy="505" r="8.5" fill="none" stroke="#ff2020" stroke-width="2.2"/>
<path d="M1982.88,496.50L1999.88,513.50M1982.88,513.50L1999.88,496.50" stroke="#2020ff" stroke-width="2.2" fill="none"/>
<circle cx="2022.37" cy="549" r="8.5" fill="none" stroke="#ff2020" stroke-width="2.2"/>
<circle cx="2029.66" cy="593" r="8.5" fill="none" stroke="#ff2020" stroke-width="2.2"/>
<path d="M2298.75,584.50L2315.75,601.50M2298.75,601.50L2315.75,584.50" stroke="#2020ff" stroke-width="2.2" fill="none"/>
<circle cx="2050.23" cy="637" r="8.5" fill="none" stroke="#ff2020" stroke-width="2.2"/>
<path d="M2178.70,628.50L2195.70,645.50M2178.70,645.50L2195.70,628.50" stroke="#2020ff" stroke-width="2.2" fill="none"/>
<circle cx="2048.67" cy="681" r="8.5" fill="none" stroke="#ff2020" stroke-width="2.2"/>
<path d="M2075.58,672.50L2092.58,689.50M2075.58,689.50L2092.58,672.50" stroke="#2020ff" stroke-width="2.2" fill="none"/>
<circle cx="2080.96" cy="725" r="8.5" fill="none" stroke="#ff2020" stroke-width="2.2"/>
<circle cx="2042.16" cy="769" r="8.5" fill="none" stroke="#ff2020" stroke-width="2.2"/>
<path d="M2008.66,760.50L2025.66,777.50M2008.66,777.50L2025.66,760.50" stroke="#2020ff" stroke-width="2.2" fill="none"/>
<circle cx="2026.54" cy="813" r="8.5" fill="none" stroke="#ff2020" stroke-width="2.2"/>
<path d="M2015.95,804.50L2032.95,821.50M2015.95,821.50L2032.95,804.50" stroke="#2020ff" stroke-width="2.2" fill="none"/>
<rect x="0.00" y="836.00" width="2638.00" height="44.00" fill="#ebebeb" />
<text x="1351.64" y="866.60" font-size="25" fill="#000" stroke="#000" stroke-width="0.3" textLength="77.77" lengthAdjust="spacingAndGlyphs">Round</text>
<text x="1437.01" y="866.60" font-size="25" fill="#000" stroke="#000" stroke-width="0.3" textLength="47.87" lengthAdjust="spacingAndGlyphs">Trip</text>
<text x="1493.22" y="866.60" font-size="25" fill="#000" stroke="#000" stroke-width="0.3" textLength="54.88" lengthAdjust="spacingAndGlyphs">(ms)</text>
<text x="1596.25" y="866.60" font-size="25" fill="#000" stroke="#000" stroke-width="0.3" textLength="52.60" lengthAdjust="spacingAndGlyphs">34,0</text>
<text x="1776.88" y="866.60" font-size="25" fill="#000" stroke="#000" stroke-width="0.3" textLength="52.06" lengthAdjust="spacingAndGlyphs">33,2</text>
<text x="2235.00" y="866.90" font-size="25" fill="#4a4a4a" stroke="#4a4a4a" stroke-width="0.3" textLength="69.84" lengthAdjust="spacingAndGlyphs">Focus</text>
<rect x="2309.03" y="854.00" width="3.20" height="2.90" fill="#4a4a4a"/>
<rect x="2309.03" y="864.00" width="3.20" height="2.90" fill="#4a4a4a"/>
<text x="2324.51" y="866.90" font-size="25" fill="#4a4a4a" stroke="#4a4a4a" stroke-width="0.3" textLength="30.01" lengthAdjust="spacingAndGlyphs">16</text>
<rect x="2358.80" y="854.00" width="3.20" height="2.90" fill="#4a4a4a"/>
<rect x="2358.80" y="864.00" width="3.20" height="2.90" fill="#4a4a4a"/>
<text x="2366.49" y="866.90" font-size="25" fill="#4a4a4a" stroke="#4a4a4a" stroke-width="0.3" textLength="29.38" lengthAdjust="spacingAndGlyphs">05</text>
<rect x="2400.83" y="854.00" width="3.20" height="2.90" fill="#4a4a4a"/>
<rect x="2400.83" y="864.00" width="3.20" height="2.90" fill="#4a4a4a"/>
<text x="2408.52" y="866.90" font-size="25" fill="#4a4a4a" stroke="#4a4a4a" stroke-width="0.3" textLength="29.83" lengthAdjust="spacingAndGlyphs">40</text>
<text x="2446.68" y="866.90" font-size="25" fill="#4a4a4a" stroke="#4a4a4a" stroke-width="0.3" textLength="8.74" lengthAdjust="spacingAndGlyphs">-</text>
<text x="2463.80" y="866.90" font-size="25" fill="#4a4a4a" stroke="#4a4a4a" stroke-width="0.3" textLength="30.01" lengthAdjust="spacingAndGlyphs">16</text>
<rect x="2498.09" y="854.00" width="3.20" height="2.90" fill="#4a4a4a"/>
<rect x="2498.09" y="864.00" width="3.20" height="2.90" fill="#4a4a4a"/>
<text x="2505.88" y="866.90" font-size="25" fill="#4a4a4a" stroke="#4a4a4a" stroke-width="0.3" textLength="29.28" lengthAdjust="spacingAndGlyphs">15</text>
<rect x="2540.12" y="854.00" width="3.20" height="2.90" fill="#4a4a4a"/>
<rect x="2540.12" y="864.00" width="3.20" height="2.90" fill="#4a4a4a"/>
<text x="2547.81" y="866.90" font-size="25" fill="#4a4a4a" stroke="#4a4a4a" stroke-width="0.3" textLength="29.83" lengthAdjust="spacingAndGlyphs">40</text>
<rect x="0.00" y="880.00" width="2638.00" height="2.00" fill="#c0c0c0" />
<rect x="0.00" y="882.00" width="2638.00" height="138.00" fill="#f4f4f4" />
<text x="5.14" y="910.10" font-size="25" fill="#404040" stroke="#404040" stroke-width="0.3" textLength="185.52" lengthAdjust="spacingAndGlyphs">www.google.de</text>
<text x="198.81" y="910.10" font-size="25" fill="#404040" stroke="#404040" stroke-width="0.3" textLength="69.41" lengthAdjust="spacingAndGlyphs">(2a00</text>
<rect x="272.65" y="897.20" width="3.20" height="2.90" fill="#404040"/>
<rect x="272.65" y="907.20" width="3.20" height="2.90" fill="#404040"/>
<text x="280.32" y="910.10" font-size="25" fill="#404040" stroke="#404040" stroke-width="0.3" textLength="60.35" lengthAdjust="spacingAndGlyphs">1450</text>
<rect x="345.11" y="897.20" width="3.20" height="2.90" fill="#404040"/>
<rect x="345.11" y="907.20" width="3.20" height="2.90" fill="#404040"/>
<text x="352.74" y="910.10" font-size="25" fill="#404040" stroke="#404040" stroke-width="0.3" textLength="60.61" lengthAdjust="spacingAndGlyphs">4016</text>
<rect x="417.57" y="897.20" width="3.20" height="2.90" fill="#404040"/>
<rect x="417.57" y="907.20" width="3.20" height="2.90" fill="#404040"/>
<text x="425.10" y="910.10" font-size="25" fill="#404040" stroke="#404040" stroke-width="0.3" textLength="45.45" lengthAdjust="spacingAndGlyphs">80b</text>
<rect x="474.62" y="897.20" width="3.20" height="2.90" fill="#404040"/>
<rect x="474.62" y="907.20" width="3.20" height="2.90" fill="#404040"/>
<rect x="485.59" y="897.20" width="3.20" height="2.90" fill="#404040"/>
<rect x="485.59" y="907.20" width="3.20" height="2.90" fill="#404040"/>
<text x="493.06" y="910.10" font-size="25" fill="#404040" stroke="#404040" stroke-width="0.3" textLength="70.15" lengthAdjust="spacingAndGlyphs">2003)</text>
<text x="571.59" y="910.10" font-size="25" fill="#404040" stroke="#404040" stroke-width="0.3" textLength="44.91" lengthAdjust="spacingAndGlyphs">hop</text>
<text x="625.03" y="910.10" font-size="25" fill="#404040" stroke="#404040" stroke-width="0.3" textLength="29.06" lengthAdjust="spacingAndGlyphs">15</text>
<text x="2213.54" y="909.80" font-size="25" fill="#404040" stroke="#404040" stroke-width="0.3" textLength="30.03" lengthAdjust="spacingAndGlyphs">10</text>
<text x="2252.31" y="909.80" font-size="25" fill="#404040" stroke="#404040" stroke-width="0.3" textLength="98.87" lengthAdjust="spacingAndGlyphs">minutes</text>
<text x="2359.56" y="909.80" font-size="25" fill="#404040" stroke="#404040" stroke-width="0.3" textLength="40.11" lengthAdjust="spacingAndGlyphs">(16</text>
<rect x="2403.98" y="896.90" width="3.20" height="2.90" fill="#404040"/>
<rect x="2403.98" y="906.90" width="3.20" height="2.90" fill="#404040"/>
<text x="2411.73" y="909.80" font-size="25" fill="#404040" stroke="#404040" stroke-width="0.3" textLength="29.64" lengthAdjust="spacingAndGlyphs">05</text>
<rect x="2446.38" y="896.90" width="3.20" height="2.90" fill="#404040"/>
<rect x="2446.38" y="906.90" width="3.20" height="2.90" fill="#404040"/>
<text x="2454.13" y="909.80" font-size="25" fill="#404040" stroke="#404040" stroke-width="0.3" textLength="30.10" lengthAdjust="spacingAndGlyphs">40</text>
<text x="2492.63" y="909.80" font-size="25" fill="#404040" stroke="#404040" stroke-width="0.3" textLength="8.82" lengthAdjust="spacingAndGlyphs">-</text>
<text x="2509.90" y="909.80" font-size="25" fill="#404040" stroke="#404040" stroke-width="0.3" textLength="30.27" lengthAdjust="spacingAndGlyphs">16</text>
<rect x="2544.51" y="896.90" width="3.20" height="2.90" fill="#404040"/>
<rect x="2544.51" y="906.90" width="3.20" height="2.90" fill="#404040"/>
<text x="2552.35" y="909.80" font-size="25" fill="#404040" stroke="#404040" stroke-width="0.3" textLength="29.54" lengthAdjust="spacingAndGlyphs">15</text>
<rect x="2586.91" y="896.90" width="3.20" height="2.90" fill="#404040"/>
<rect x="2586.91" y="906.90" width="3.20" height="2.90" fill="#404040"/>
<text x="2594.65" y="909.80" font-size="25" fill="#404040" stroke="#404040" stroke-width="0.3" textLength="39.86" lengthAdjust="spacingAndGlyphs">40)</text>
<rect x="76.00" y="914.00" width="2512.00" height="27.00" fill="#ffecd0" />
<rect x="76.00" y="941.00" width="2512.00" height="45.00" fill="#e0f0d6" />
<rect x="230.60" y="945.87" width="11.41" height="3.80" fill="#1a1a1a" />
<rect x="241.01" y="945.87" width="2.00" height="25.81" fill="#1a1a1a" />
<rect x="241.01" y="967.89" width="55.62" height="3.80" fill="#1a1a1a" />
<rect x="295.63" y="965.44" width="2.00" height="6.25" fill="#1a1a1a" />
<rect x="295.63" y="965.44" width="10.78" height="3.80" fill="#1a1a1a" />
<rect x="305.42" y="963.81" width="2.00" height="5.43" fill="#1a1a1a" />
<rect x="305.42" y="963.81" width="8.83" height="3.80" fill="#1a1a1a" />
<rect x="313.24" y="963.81" width="2.00" height="7.88" fill="#1a1a1a" />
<rect x="313.24" y="967.89" width="43.72" height="3.80" fill="#1a1a1a" />
<rect x="355.96" y="959.73" width="9.97" height="3.80" fill="#1a1a1a" />
<rect x="364.93" y="959.73" width="2.00" height="11.95" fill="#1a1a1a" />
<rect x="364.93" y="967.89" width="45.02" height="3.80" fill="#1a1a1a" />
<rect x="408.96" y="963.81" width="2.00" height="7.88" fill="#1a1a1a" />
<rect x="408.96" y="963.81" width="21.06" height="3.80" fill="#1a1a1a" />
<rect x="429.01" y="963.81" width="2.00" height="7.88" fill="#1a1a1a" />
<rect x="429.01" y="967.89" width="12.74" height="3.80" fill="#1a1a1a" />
<rect x="440.75" y="963.81" width="2.00" height="7.88" fill="#1a1a1a" />
<rect x="440.75" y="963.81" width="11.11" height="3.80" fill="#1a1a1a" />
<rect x="450.86" y="929.90" width="2.00" height="37.71" fill="#1a1a1a" />
<rect x="450.86" y="929.90" width="11.27" height="3.80" fill="#1a1a1a" />
<rect x="461.13" y="929.90" width="2.00" height="41.79" fill="#1a1a1a" />
<rect x="461.13" y="967.89" width="23.01" height="3.80" fill="#1a1a1a" />
<rect x="483.14" y="955.66" width="2.00" height="16.03" fill="#1a1a1a" />
<rect x="483.14" y="955.66" width="8.83" height="3.80" fill="#1a1a1a" />
<rect x="490.97" y="955.66" width="2.00" height="17.99" fill="#1a1a1a" />
<rect x="490.97" y="969.84" width="15.19" height="3.80" fill="#1a1a1a" />
<rect x="505.16" y="955.66" width="2.00" height="17.99" fill="#1a1a1a" />
<rect x="505.16" y="955.66" width="9.15" height="3.80" fill="#1a1a1a" />
<rect x="513.31" y="955.66" width="2.00" height="17.99" fill="#1a1a1a" />
<rect x="513.31" y="969.84" width="13.23" height="3.80" fill="#1a1a1a" />
<rect x="525.54" y="967.89" width="2.00" height="5.76" fill="#1a1a1a" />
<rect x="525.54" y="967.89" width="10.78" height="3.80" fill="#1a1a1a" />
<rect x="535.32" y="965.44" width="2.00" height="6.25" fill="#1a1a1a" />
<rect x="535.32" y="965.44" width="12.41" height="3.80" fill="#1a1a1a" />
<rect x="546.74" y="963.81" width="2.00" height="5.43" fill="#1a1a1a" />
<rect x="546.74" y="963.81" width="10.78" height="3.80" fill="#1a1a1a" />
<rect x="556.52" y="959.73" width="2.00" height="7.88" fill="#1a1a1a" />
<rect x="556.52" y="959.73" width="9.15" height="3.80" fill="#1a1a1a" />
<rect x="564.67" y="959.73" width="2.00" height="16.03" fill="#1a1a1a" />
<rect x="564.67" y="971.96" width="13.23" height="3.80" fill="#1a1a1a" />
<rect x="576.90" y="940.17" width="2.00" height="35.60" fill="#1a1a1a" />
<rect x="576.90" y="940.17" width="10.78" height="3.80" fill="#1a1a1a" />
<rect x="586.68" y="940.17" width="2.00" height="19.29" fill="#1a1a1a" />
<rect x="586.68" y="955.66" width="10.78" height="3.80" fill="#1a1a1a" />
<rect x="596.47" y="955.66" width="2.00" height="6.25" fill="#1a1a1a" />
<rect x="596.47" y="958.10" width="11.60" height="3.80" fill="#1a1a1a" />
<rect x="607.06" y="958.10" width="2.00" height="13.58" fill="#1a1a1a" />
<rect x="607.06" y="967.89" width="35.12" height="3.80" fill="#1a1a1a" />
<rect x="641.18" y="954.03" width="2.00" height="17.66" fill="#1a1a1a" />
<rect x="641.18" y="954.03" width="9.15" height="3.80" fill="#1a1a1a" />
<rect x="649.34" y="954.03" width="2.00" height="13.91" fill="#1a1a1a" />
<rect x="649.34" y="964.14" width="10.78" height="3.80" fill="#1a1a1a" />
<rect x="659.12" y="964.14" width="2.00" height="7.55" fill="#1a1a1a" />
<rect x="659.12" y="967.89" width="10.78" height="3.80" fill="#1a1a1a" />
<rect x="668.90" y="967.89" width="2.00" height="7.88" fill="#1a1a1a" />
<rect x="668.90" y="971.96" width="15.67" height="3.80" fill="#1a1a1a" />
<rect x="683.58" y="963.81" width="2.00" height="11.95" fill="#1a1a1a" />
<rect x="683.58" y="963.81" width="10.78" height="3.80" fill="#1a1a1a" />
<rect x="693.36" y="961.69" width="2.00" height="5.92" fill="#1a1a1a" />
<rect x="693.36" y="961.69" width="8.83" height="3.80" fill="#1a1a1a" />
<rect x="701.19" y="961.69" width="2.00" height="16.03" fill="#1a1a1a" />
<rect x="701.19" y="973.92" width="11.11" height="3.80" fill="#1a1a1a" />
<rect x="711.30" y="973.92" width="2.00" height="5.92" fill="#1a1a1a" />
<rect x="711.30" y="976.04" width="14.86" height="3.80" fill="#1a1a1a" />
<rect x="725.16" y="964.14" width="2.00" height="15.70" fill="#1a1a1a" />
<rect x="725.16" y="964.14" width="9.15" height="3.80" fill="#1a1a1a" />
<rect x="733.31" y="964.14" width="2.00" height="13.58" fill="#1a1a1a" />
<rect x="733.31" y="973.92" width="32.80" height="3.80" fill="#1a1a1a" />
<rect x="765.10" y="973.92" width="2.00" height="5.92" fill="#1a1a1a" />
<rect x="765.10" y="976.04" width="13.23" height="3.80" fill="#1a1a1a" />
<rect x="777.33" y="973.92" width="2.00" height="5.92" fill="#1a1a1a" />
<rect x="777.33" y="973.92" width="94.68" height="3.80" fill="#1a1a1a" />
<rect x="871.01" y="963.81" width="2.00" height="13.91" fill="#1a1a1a" />
<rect x="871.01" y="963.81" width="21.38" height="3.80" fill="#1a1a1a" />
<rect x="891.39" y="963.81" width="2.00" height="16.03" fill="#1a1a1a" />
<rect x="891.39" y="976.04" width="12.41" height="3.80" fill="#1a1a1a" />
<rect x="902.81" y="969.84" width="2.00" height="10.00" fill="#1a1a1a" />
<rect x="902.81" y="969.84" width="9.15" height="3.80" fill="#1a1a1a" />
<rect x="910.96" y="969.84" width="2.00" height="10.00" fill="#1a1a1a" />
<rect x="910.96" y="976.04" width="24.97" height="3.80" fill="#1a1a1a" />
<rect x="934.93" y="969.84" width="2.00" height="10.00" fill="#1a1a1a" />
<rect x="934.93" y="969.84" width="8.83" height="3.80" fill="#1a1a1a" />
<rect x="942.76" y="969.84" width="2.00" height="10.00" fill="#1a1a1a" />
<rect x="942.76" y="976.04" width="23.50" height="3.80" fill="#1a1a1a" />
<rect x="965.26" y="965.77" width="2.00" height="14.07" fill="#1a1a1a" />
<rect x="965.26" y="965.77" width="10.62" height="3.80" fill="#1a1a1a" />
<rect x="974.88" y="965.77" width="2.00" height="14.07" fill="#1a1a1a" />
<rect x="974.88" y="976.04" width="12.90" height="3.80" fill="#1a1a1a" />
<rect x="986.78" y="973.92" width="2.00" height="5.92" fill="#1a1a1a" />
<rect x="986.78" y="973.92" width="11.27" height="3.80" fill="#1a1a1a" />
<rect x="997.05" y="961.69" width="2.00" height="16.03" fill="#1a1a1a" />
<rect x="997.05" y="961.69" width="9.15" height="3.80" fill="#1a1a1a" />
<rect x="1005.20" y="961.69" width="2.00" height="16.03" fill="#1a1a1a" />
<rect x="1005.20" y="973.92" width="23.66" height="3.80" fill="#1a1a1a" />
<rect x="1027.87" y="969.84" width="11.76" height="3.80" fill="#1a1a1a" />
<rect x="1038.63" y="961.69" width="2.00" height="11.95" fill="#1a1a1a" />
<rect x="1038.63" y="961.69" width="9.15" height="3.80" fill="#1a1a1a" />
<rect x="1046.78" y="961.69" width="2.00" height="16.03" fill="#1a1a1a" />
<rect x="1046.78" y="973.92" width="31.49" height="3.80" fill="#1a1a1a" />
<rect x="1077.27" y="973.92" width="2.00" height="5.92" fill="#1a1a1a" />
<rect x="1077.27" y="976.04" width="12.74" height="3.80" fill="#1a1a1a" />
<rect x="1089.01" y="973.92" width="2.00" height="5.92" fill="#1a1a1a" />
<rect x="1089.01" y="973.92" width="8.83" height="3.80" fill="#1a1a1a" />
<rect x="1096.84" y="973.92" width="2.00" height="5.92" fill="#1a1a1a" />
<rect x="1096.84" y="976.04" width="14.86" height="3.80" fill="#1a1a1a" />
<rect x="1110.70" y="973.92" width="2.00" height="5.92" fill="#1a1a1a" />
<rect x="1110.70" y="973.92" width="19.42" height="3.80" fill="#1a1a1a" />
<rect x="1129.12" y="973.92" width="2.00" height="5.92" fill="#1a1a1a" />
<rect x="1129.12" y="976.04" width="34.75" height="3.80" fill="#1a1a1a" />
<rect x="1162.88" y="973.92" width="2.00" height="5.92" fill="#1a1a1a" />
<rect x="1162.88" y="973.92" width="10.78" height="3.80" fill="#1a1a1a" />
<rect x="1172.66" y="967.89" width="2.00" height="9.83" fill="#1a1a1a" />
<rect x="1172.66" y="967.89" width="8.83" height="3.80" fill="#1a1a1a" />
<rect x="1180.49" y="967.89" width="2.00" height="9.83" fill="#1a1a1a" />
<rect x="1180.49" y="973.92" width="13.56" height="3.80" fill="#1a1a1a" />
<rect x="1193.04" y="973.92" width="2.00" height="5.92" fill="#1a1a1a" />
<rect x="1193.04" y="976.04" width="12.90" height="3.80" fill="#1a1a1a" />
<rect x="1204.94" y="973.92" width="2.00" height="5.92" fill="#1a1a1a" />
<rect x="1204.94" y="973.92" width="10.78" height="3.80" fill="#1a1a1a" />
<rect x="1214.73" y="963.81" width="2.00" height="13.91" fill="#1a1a1a" />
<rect x="1214.73" y="963.81" width="9.48" height="3.80" fill="#1a1a1a" />
<rect x="1223.21" y="963.81" width="2.00" height="13.91" fill="#1a1a1a" />
<rect x="1223.21" y="973.92" width="24.97" height="3.80" fill="#1a1a1a" />
<rect x="1247.17" y="963.81" width="2.00" height="13.91" fill="#1a1a1a" />
<rect x="1247.17" y="963.81" width="9.15" height="3.80" fill="#1a1a1a" />
<rect x="1255.33" y="963.81" width="2.00" height="13.91" fill="#1a1a1a" />
<rect x="1255.33" y="973.92" width="23.75" height="3.80" fill="#1a1a1a" />
<rect x="1278.08" y="976.04" width="12.09" height="3.80" fill="#1a1a1a" />
<rect x="1289.16" y="973.92" width="2.00" height="5.92" fill="#1a1a1a" />
<rect x="1289.16" y="973.92" width="30.84" height="3.80" fill="#1a1a1a" />
<rect x="1319.00" y="973.92" width="2.00" height="5.92" fill="#1a1a1a" />
<rect x="1319.00" y="976.04" width="12.74" height="3.80" fill="#1a1a1a" />
<rect x="1330.74" y="973.92" width="2.00" height="5.92" fill="#1a1a1a" />
<rect x="1330.74" y="973.92" width="11.11" height="3.80" fill="#1a1a1a" />
<rect x="1340.85" y="965.77" width="2.00" height="11.95" fill="#1a1a1a" />
<rect x="1340.85" y="965.77" width="9.15" height="3.80" fill="#1a1a1a" />
<rect x="1349.00" y="965.77" width="2.00" height="10.00" fill="#1a1a1a" />
<rect x="1349.00" y="971.96" width="23.99" height="3.80" fill="#1a1a1a" />
<rect x="1372.00" y="973.92" width="10.29" height="3.80" fill="#1a1a1a" />
<rect x="1381.29" y="973.92" width="2.00" height="5.92" fill="#1a1a1a" />
<rect x="1381.29" y="976.04" width="22.52" height="3.80" fill="#1a1a1a" />
<rect x="1402.81" y="973.92" width="2.00" height="5.92" fill="#1a1a1a" />
<rect x="1402.81" y="973.92" width="13.39" height="3.80" fill="#1a1a1a" />
<rect x="1415.20" y="969.84" width="2.00" height="7.88" fill="#1a1a1a" />
<rect x="1415.20" y="969.84" width="9.15" height="3.80" fill="#1a1a1a" />
<rect x="1423.36" y="969.84" width="2.00" height="5.92" fill="#1a1a1a" />
<rect x="1423.36" y="971.96" width="12.74" height="3.80" fill="#1a1a1a" />
<rect x="1435.10" y="965.77" width="2.00" height="10.00" fill="#1a1a1a" />
<rect x="1435.10" y="965.77" width="9.15" height="3.80" fill="#1a1a1a" />
<rect x="1443.25" y="965.77" width="2.00" height="11.95" fill="#1a1a1a" />
<rect x="1443.25" y="973.92" width="23.01" height="3.80" fill="#1a1a1a" />
<rect x="1465.26" y="973.92" width="2.00" height="5.92" fill="#1a1a1a" />
<rect x="1465.26" y="976.04" width="12.74" height="3.80" fill="#1a1a1a" />
<rect x="1477.00" y="973.92" width="2.00" height="5.92" fill="#1a1a1a" />
<rect x="1477.00" y="973.92" width="23.50" height="3.80" fill="#1a1a1a" />
<rect x="1499.50" y="971.96" width="2.00" height="5.76" fill="#1a1a1a" />
<rect x="1499.50" y="971.96" width="8.83" height="3.80" fill="#1a1a1a" />
<rect x="1507.33" y="971.96" width="2.00" height="5.76" fill="#1a1a1a" />
<rect x="1507.33" y="973.92" width="12.74" height="3.80" fill="#1a1a1a" />
<rect x="1519.07" y="961.69" width="2.00" height="16.03" fill="#1a1a1a" />
<rect x="1519.07" y="961.69" width="9.15" height="3.80" fill="#1a1a1a" />
<rect x="1527.22" y="961.69" width="2.00" height="18.15" fill="#1a1a1a" />
<rect x="1527.22" y="976.04" width="14.86" height="3.80" fill="#1a1a1a" />
<rect x="1541.08" y="965.77" width="2.00" height="14.07" fill="#1a1a1a" />
<rect x="1541.08" y="965.77" width="9.15" height="3.80" fill="#1a1a1a" />
<rect x="1549.23" y="965.77" width="2.00" height="14.07" fill="#1a1a1a" />
<rect x="1549.23" y="976.04" width="12.90" height="3.80" fill="#1a1a1a" />
<rect x="1561.14" y="967.89" width="2.00" height="11.95" fill="#1a1a1a" />
<rect x="1561.14" y="967.89" width="9.15" height="3.80" fill="#1a1a1a" />
<rect x="1569.29" y="967.89" width="2.00" height="7.88" fill="#1a1a1a" />
<rect x="1569.29" y="971.96" width="14.70" height="3.80" fill="#1a1a1a" />
<rect x="1582.98" y="965.77" width="2.00" height="10.00" fill="#1a1a1a" />
<rect x="1582.98" y="965.77" width="10.95" height="3.80" fill="#1a1a1a" />
<rect x="1592.93" y="937.72" width="2.00" height="31.85" fill="#1a1a1a" />
<rect x="1592.93" y="937.72" width="9.15" height="3.80" fill="#1a1a1a" />
<rect x="1601.08" y="937.72" width="2.00" height="7.88" fill="#1a1a1a" />
<rect x="1601.08" y="941.80" width="12.74" height="3.80" fill="#1a1a1a" />
<rect x="1612.82" y="932.01" width="2.00" height="13.58" fill="#1a1a1a" />
<rect x="1612.82" y="932.01" width="22.20" height="3.80" fill="#1a1a1a" />
<rect x="1634.02" y="973.92" width="20.24" height="3.80" fill="#1a1a1a" />
<rect x="1653.26" y="973.92" width="2.00" height="5.92" fill="#1a1a1a" />
<rect x="1653.26" y="976.04" width="14.86" height="3.80" fill="#1a1a1a" />
<rect x="1667.12" y="965.77" width="2.00" height="14.07" fill="#1a1a1a" />
<rect x="1667.12" y="965.77" width="9.15" height="3.80" fill="#1a1a1a" />
<rect x="1675.27" y="965.77" width="2.00" height="7.88" fill="#1a1a1a" />
<rect x="1675.27" y="969.84" width="23.26" height="3.80" fill="#1a1a1a" />
<rect x="1697.53" y="967.89" width="2.00" height="5.76" fill="#1a1a1a" />
<rect x="1697.53" y="967.89" width="10.29" height="3.80" fill="#1a1a1a" />
<rect x="1706.83" y="967.89" width="2.00" height="9.83" fill="#1a1a1a" />
<rect x="1706.83" y="973.92" width="22.20" height="3.80" fill="#1a1a1a" />
<rect x="1728.02" y="955.66" width="23.99" height="3.80" fill="#1a1a1a" />
<rect x="1751.02" y="925.82" width="2.00" height="33.64" fill="#1a1a1a" />
<rect x="1751.02" y="925.82" width="9.15" height="3.80" fill="#1a1a1a" />
<rect x="1759.17" y="925.82" width="2.00" height="54.02" fill="#1a1a1a" />
<rect x="1759.17" y="976.04" width="13.07" height="3.80" fill="#1a1a1a" />
<rect x="1771.23" y="963.81" width="2.00" height="16.03" fill="#1a1a1a" />
<rect x="1771.23" y="963.81" width="8.83" height="3.80" fill="#1a1a1a" />
<rect x="1779.06" y="963.81" width="2.00" height="13.91" fill="#1a1a1a" />
<rect x="1779.06" y="973.92" width="34.91" height="3.80" fill="#1a1a1a" />
<rect x="1812.98" y="967.89" width="2.00" height="9.83" fill="#1a1a1a" />
<rect x="1812.98" y="967.89" width="9.15" height="3.80" fill="#1a1a1a" />
<rect x="1821.13" y="967.89" width="2.00" height="13.91" fill="#1a1a1a" />
<rect x="1821.13" y="978.00" width="12.74" height="3.80" fill="#1a1a1a" />
<rect x="1832.87" y="971.96" width="2.00" height="9.83" fill="#1a1a1a" />
<rect x="1832.87" y="971.96" width="13.23" height="3.80" fill="#1a1a1a" />
<rect x="1845.10" y="965.77" width="2.00" height="10.00" fill="#1a1a1a" />
<rect x="1845.10" y="965.77" width="9.15" height="3.80" fill="#1a1a1a" />
<rect x="1853.25" y="965.77" width="2.00" height="11.95" fill="#1a1a1a" />
<rect x="1853.25" y="973.92" width="12.90" height="3.80" fill="#1a1a1a" />
<rect x="1865.15" y="965.77" width="2.00" height="11.95" fill="#1a1a1a" />
<rect x="1865.15" y="965.77" width="9.15" height="3.80" fill="#1a1a1a" />
<rect x="1873.30" y="965.77" width="2.00" height="14.07" fill="#1a1a1a" />
<rect x="1873.30" y="976.04" width="34.75" height="3.80" fill="#1a1a1a" />
<rect x="1907.06" y="965.77" width="2.00" height="14.07" fill="#1a1a1a" />
<rect x="1907.06" y="965.77" width="9.15" height="3.80" fill="#1a1a1a" />
<rect x="1915.21" y="965.77" width="2.00" height="5.92" fill="#1a1a1a" />
<rect x="1915.21" y="967.89" width="24.64" height="3.80" fill="#1a1a1a" />
<rect x="1938.85" y="963.81" width="2.00" height="7.88" fill="#1a1a1a" />
<rect x="1938.85" y="963.81" width="9.97" height="3.80" fill="#1a1a1a" />
<rect x="1947.82" y="963.81" width="2.00" height="5.76" fill="#1a1a1a" />
<rect x="1947.82" y="965.77" width="9.97" height="3.80" fill="#1a1a1a" />
<rect x="1956.79" y="965.77" width="2.00" height="5.92" fill="#1a1a1a" />
<rect x="1956.79" y="967.89" width="24.32" height="3.80" fill="#1a1a1a" />
<rect x="1980.10" y="965.77" width="11.92" height="3.80" fill="#1a1a1a" />
<rect x="1991.03" y="959.73" width="2.00" height="9.83" fill="#1a1a1a" />
<rect x="1991.03" y="959.73" width="9.15" height="3.80" fill="#1a1a1a" />
<rect x="1999.18" y="959.73" width="2.00" height="13.91" fill="#1a1a1a" />
<rect x="1999.18" y="969.84" width="14.86" height="3.80" fill="#1a1a1a" />
<rect x="2013.04" y="967.89" width="2.00" height="5.76" fill="#1a1a1a" />
<rect x="2013.04" y="967.89" width="18.94" height="3.80" fill="#1a1a1a" />
<rect x="2030.98" y="967.89" width="2.00" height="5.76" fill="#1a1a1a" />
<rect x="2030.98" y="969.84" width="13.23" height="3.80" fill="#1a1a1a" />
<rect x="2043.21" y="967.89" width="2.00" height="5.76" fill="#1a1a1a" />
<rect x="2043.21" y="967.89" width="10.78" height="3.80" fill="#1a1a1a" />
<rect x="2052.99" y="967.89" width="2.00" height="5.76" fill="#1a1a1a" />
<rect x="2052.99" y="969.84" width="13.23" height="3.80" fill="#1a1a1a" />
<rect x="2065.22" y="967.89" width="2.00" height="5.76" fill="#1a1a1a" />
<rect x="2065.22" y="967.89" width="18.12" height="3.80" fill="#1a1a1a" />
<rect x="2082.34" y="967.89" width="2.00" height="5.76" fill="#1a1a1a" />
<rect x="2082.34" y="969.84" width="1.25" height="3.80" fill="#1a1a1a" />
<rect x="2082.59" y="969.84" width="2.00" height="3.80" fill="#1a1a1a" />
<rect x="2082.59" y="969.84" width="15.67" height="3.80" fill="#1a1a1a" />
<rect x="2097.26" y="959.73" width="2.00" height="13.91" fill="#1a1a1a" />
<rect x="2097.26" y="959.73" width="10.78" height="3.80" fill="#1a1a1a" />
<rect x="2107.05" y="925.82" width="2.00" height="37.71" fill="#1a1a1a" />
<rect x="2107.05" y="925.82" width="19.91" height="3.80" fill="#1a1a1a" />
<rect x="2125.96" y="943.75" width="22.85" height="3.80" fill="#1a1a1a" />
<rect x="2147.81" y="967.89" width="30.02" height="3.80" fill="#1a1a1a" />
<rect x="2176.83" y="967.89" width="2.00" height="5.76" fill="#1a1a1a" />
<rect x="2176.83" y="969.84" width="15.35" height="3.80" fill="#1a1a1a" />
<rect x="2191.18" y="967.89" width="2.00" height="5.76" fill="#1a1a1a" />
<rect x="2191.18" y="967.89" width="11.11" height="3.80" fill="#1a1a1a" />
<rect x="2201.29" y="963.81" width="2.00" height="7.88" fill="#1a1a1a" />
<rect x="2201.29" y="963.81" width="9.15" height="3.80" fill="#1a1a1a" />
<rect x="2209.44" y="963.81" width="2.00" height="7.88" fill="#1a1a1a" />
<rect x="2209.44" y="967.89" width="23.34" height="3.80" fill="#1a1a1a" />
<rect x="2231.78" y="957.61" width="20.24" height="3.80" fill="#1a1a1a" />
<rect x="2251.02" y="957.61" width="2.00" height="16.03" fill="#1a1a1a" />
<rect x="2251.02" y="969.84" width="35.24" height="3.80" fill="#1a1a1a" />
<rect x="2285.26" y="963.81" width="2.00" height="9.83" fill="#1a1a1a" />
<rect x="2285.26" y="963.81" width="9.15" height="3.80" fill="#1a1a1a" />
<rect x="2293.41" y="963.81" width="2.00" height="5.76" fill="#1a1a1a" />
<rect x="2293.41" y="965.77" width="9.47" height="3.80" fill="#1a1a1a" />
<rect x="2301.89" y="965.77" width="2.00" height="6.02" fill="#1a1a1a" />
<rect x="2301.89" y="967.98" width="16.48" height="3.80" fill="#1a1a1a" />
<rect x="2317.37" y="964.70" width="2.00" height="7.08" fill="#1a1a1a" />
<rect x="2317.37" y="964.70" width="8.22" height="3.80" fill="#1a1a1a" />
<rect x="2324.59" y="964.70" width="2.00" height="7.08" fill="#1a1a1a" />
<rect x="2324.59" y="967.98" width="13.47" height="3.80" fill="#1a1a1a" />
<rect x="2337.05" y="964.70" width="2.00" height="7.08" fill="#1a1a1a" />
<rect x="2337.05" y="964.70" width="8.22" height="3.80" fill="#1a1a1a" />
<rect x="2344.27" y="964.70" width="2.00" height="7.08" fill="#1a1a1a" />
<rect x="2344.27" y="967.98" width="23.96" height="3.80" fill="#1a1a1a" />
<rect x="2367.23" y="967.98" width="2.00" height="5.77" fill="#1a1a1a" />
<rect x="2367.23" y="969.95" width="12.81" height="3.80" fill="#1a1a1a" />
<rect x="2379.04" y="956.17" width="2.00" height="17.58" fill="#1a1a1a" />
<rect x="2379.04" y="956.17" width="8.61" height="3.80" fill="#1a1a1a" />
<rect x="2386.65" y="956.17" width="2.00" height="17.58" fill="#1a1a1a" />
<rect x="2386.65" y="969.95" width="15.70" height="3.80" fill="#1a1a1a" />
<rect x="2401.35" y="922.06" width="2.00" height="51.69" fill="#1a1a1a" />
<rect x="2401.35" y="922.06" width="8.87" height="3.80" fill="#1a1a1a" />
<rect x="2409.22" y="922.06" width="2.00" height="49.73" fill="#1a1a1a" />
<rect x="2409.22" y="967.98" width="32.49" height="3.80" fill="#1a1a1a" />
<rect x="2440.71" y="967.98" width="2.00" height="5.77" fill="#1a1a1a" />
<rect x="2440.71" y="969.95" width="23.31" height="3.80" fill="#1a1a1a" />
<rect x="2463.02" y="966.01" width="2.00" height="7.74" fill="#1a1a1a" />
<rect x="2463.02" y="966.01" width="10.84" height="3.80" fill="#1a1a1a" />
<rect x="2472.86" y="962.08" width="2.00" height="7.74" fill="#1a1a1a" />
<rect x="2472.86" y="962.08" width="13.47" height="3.80" fill="#1a1a1a" />
<rect x="2485.33" y="960.11" width="2.00" height="5.77" fill="#1a1a1a" />
<rect x="2485.33" y="960.11" width="18.71" height="3.80" fill="#1a1a1a" />
<rect x="2503.04" y="960.11" width="2.00" height="11.67" fill="#1a1a1a" />
<rect x="2503.04" y="967.98" width="13.20" height="3.80" fill="#1a1a1a" />
<rect x="2515.24" y="956.17" width="2.00" height="15.61" fill="#1a1a1a" />
<rect x="2515.24" y="956.17" width="10.45" height="3.80" fill="#1a1a1a" />
<rect x="2524.69" y="956.17" width="2.00" height="15.61" fill="#1a1a1a" />
<rect x="2524.69" y="967.98" width="23.31" height="3.80" fill="#1a1a1a" />
<rect x="2547.00" y="966.01" width="2.00" height="5.77" fill="#1a1a1a" />
<rect x="2547.00" y="966.01" width="8.87" height="3.80" fill="#1a1a1a" />
<rect x="2554.87" y="966.01" width="2.00" height="7.74" fill="#1a1a1a" />
<rect x="2554.87" y="969.95" width="12.81" height="3.80" fill="#1a1a1a" />
<rect x="2566.68" y="956.17" width="2.00" height="17.58" fill="#1a1a1a" />
<rect x="2566.68" y="956.17" width="11.50" height="3.80" fill="#1a1a1a" />
<rect x="2577.18" y="956.17" width="2.00" height="15.61" fill="#1a1a1a" />
<rect x="2577.18" y="967.98" width="10.82" height="3.80" fill="#1a1a1a" />
<rect x="253.00" y="914.00" width="10.00" height="72.00" fill="#ff0000" />
<rect x="325.00" y="914.00" width="12.00" height="72.00" fill="#ff0000" />
<rect x="347.00" y="914.00" width="10.00" height="72.00" fill="#ff0000" />
<rect x="1017.00" y="914.00" width="12.00" height="72.00" fill="#ff0000" />
<rect x="1266.80" y="914.00" width="12.20" height="72.00" fill="#ff0000" />
<rect x="1363.00" y="914.00" width="10.00" height="72.00" fill="#ff0000" />
<rect x="1625.00" y="914.00" width="10.00" height="72.00" fill="#ff0000" />
<rect x="1719.00" y="914.00" width="10.00" height="72.00" fill="#ff0000" />
<rect x="1971.00" y="914.00" width="10.00" height="72.00" fill="#ff0000" />
<rect x="2117.00" y="914.00" width="10.00" height="72.00" fill="#ff0000" />
<rect x="2139.00" y="914.00" width="10.00" height="72.00" fill="#ff0000" />
<rect x="2221.00" y="914.00" width="12.00" height="72.00" fill="#ff0000" />
<rect x="76.00" y="914.00" width="153.00" height="27.00" fill="#d2c9be" />
<rect x="76.00" y="941.00" width="153.00" height="45.00" fill="#c5cbbf" />
<rect x="229.00" y="914.00" width="2.00" height="72.00" fill="#ff0000" />
<rect x="38.00" y="986.00" width="2550.00" height="2.00" fill="#4d4d4d" />
<rect x="74.00" y="914.00" width="2.00" height="90.00" fill="#555555" />
<rect x="2587.00" y="986.00" width="2.00" height="17.00" fill="#555555" />
<rect x="154.50" y="988.00" width="2.00" height="8.00" fill="#7a7a7a" />
<rect x="406.00" y="988.00" width="2.00" height="8.00" fill="#7a7a7a" />
<rect x="657.50" y="988.00" width="2.00" height="8.00" fill="#7a7a7a" />
<rect x="909.00" y="988.00" width="2.00" height="8.00" fill="#7a7a7a" />
<rect x="1160.50" y="988.00" width="2.00" height="8.00" fill="#7a7a7a" />
<rect x="1412.00" y="988.00" width="2.00" height="8.00" fill="#7a7a7a" />
<rect x="1663.50" y="988.00" width="2.00" height="8.00" fill="#7a7a7a" />
<rect x="1915.00" y="988.00" width="2.00" height="8.00" fill="#7a7a7a" />
<rect x="2166.50" y="988.00" width="2.00" height="8.00" fill="#7a7a7a" />
<rect x="2418.00" y="988.00" width="2.00" height="8.00" fill="#7a7a7a" />
<path d="M702,988 L714,1010 L690,1010 Z" fill="#ff6464"/>
<path d="M1960,988 L1972,1010 L1948,1010 Z" fill="#ff6464"/>
<text x="129.70" y="1011.40" font-size="24" fill="#1a5a1a" stroke="#1a5a1a" stroke-width="0.3" textLength="29.88" lengthAdjust="spacingAndGlyphs">16</text>
<rect x="163.90" y="999.02" width="3.07" height="2.78" fill="#1a5a1a"/>
<rect x="163.90" y="1008.62" width="3.07" height="2.78" fill="#1a5a1a"/>
<text x="171.48" y="1011.40" font-size="24" fill="#1a5a1a" stroke="#1a5a1a" stroke-width="0.3" textLength="29.96" lengthAdjust="spacingAndGlyphs">06</text>
<text x="381.47" y="1011.40" font-size="24" fill="#1a5a1a" stroke="#1a5a1a" stroke-width="0.3" textLength="29.88" lengthAdjust="spacingAndGlyphs">16</text>
<rect x="415.67" y="999.02" width="3.07" height="2.78" fill="#1a5a1a"/>
<rect x="415.67" y="1008.62" width="3.07" height="2.78" fill="#1a5a1a"/>
<text x="423.27" y="1011.40" font-size="24" fill="#1a5a1a" stroke="#1a5a1a" stroke-width="0.3" textLength="29.55" lengthAdjust="spacingAndGlyphs">07</text>
<text x="632.77" y="1011.40" font-size="24" fill="#1a5a1a" stroke="#1a5a1a" stroke-width="0.3" textLength="29.88" lengthAdjust="spacingAndGlyphs">16</text>
<rect x="666.97" y="999.02" width="3.07" height="2.78" fill="#1a5a1a"/>
<rect x="666.97" y="1008.62" width="3.07" height="2.78" fill="#1a5a1a"/>
<text x="674.55" y="1011.40" font-size="24" fill="#1a5a1a" stroke="#1a5a1a" stroke-width="0.3" textLength="29.80" lengthAdjust="spacingAndGlyphs">08</text>
<text x="884.29" y="1011.40" font-size="24" fill="#1a5a1a" stroke="#1a5a1a" stroke-width="0.3" textLength="29.88" lengthAdjust="spacingAndGlyphs">16</text>
<rect x="918.49" y="999.02" width="3.07" height="2.78" fill="#1a5a1a"/>
<rect x="918.49" y="1008.62" width="3.07" height="2.78" fill="#1a5a1a"/>
<text x="926.07" y="1011.40" font-size="24" fill="#1a5a1a" stroke="#1a5a1a" stroke-width="0.3" textLength="29.86" lengthAdjust="spacingAndGlyphs">09</text>
<text x="1135.74" y="1011.40" font-size="24" fill="#1a5a1a" stroke="#1a5a1a" stroke-width="0.3" textLength="29.88" lengthAdjust="spacingAndGlyphs">16</text>
<rect x="1169.94" y="999.02" width="3.07" height="2.78" fill="#1a5a1a"/>
<rect x="1169.94" y="1008.62" width="3.07" height="2.78" fill="#1a5a1a"/>
<text x="1177.61" y="1011.40" font-size="24" fill="#1a5a1a" stroke="#1a5a1a" stroke-width="0.3" textLength="29.64" lengthAdjust="spacingAndGlyphs">10</text>
<text x="1387.56" y="1011.40" font-size="24" fill="#1a5a1a" stroke="#1a5a1a" stroke-width="0.3" textLength="29.88" lengthAdjust="spacingAndGlyphs">16</text>
<rect x="1421.76" y="999.02" width="3.07" height="2.78" fill="#1a5a1a"/>
<rect x="1421.76" y="1008.62" width="3.07" height="2.78" fill="#1a5a1a"/>
<text x="1429.45" y="1011.40" font-size="24" fill="#1a5a1a" stroke="#1a5a1a" stroke-width="0.3" textLength="29.23" lengthAdjust="spacingAndGlyphs">11</text>
<text x="1639.15" y="1011.40" font-size="24" fill="#1a5a1a" stroke="#1a5a1a" stroke-width="0.3" textLength="29.88" lengthAdjust="spacingAndGlyphs">16</text>
<rect x="1673.35" y="999.02" width="3.07" height="2.78" fill="#1a5a1a"/>
<rect x="1673.35" y="1008.62" width="3.07" height="2.78" fill="#1a5a1a"/>
<text x="1681.06" y="1011.40" font-size="24" fill="#1a5a1a" stroke="#1a5a1a" stroke-width="0.3" textLength="29.06" lengthAdjust="spacingAndGlyphs">12</text>
<text x="1890.41" y="1011.40" font-size="24" fill="#1a5a1a" stroke="#1a5a1a" stroke-width="0.3" textLength="29.88" lengthAdjust="spacingAndGlyphs">16</text>
<rect x="1924.61" y="999.02" width="3.07" height="2.78" fill="#1a5a1a"/>
<rect x="1924.61" y="1008.62" width="3.07" height="2.78" fill="#1a5a1a"/>
<text x="1932.29" y="1011.40" font-size="24" fill="#1a5a1a" stroke="#1a5a1a" stroke-width="0.3" textLength="29.42" lengthAdjust="spacingAndGlyphs">13</text>
<text x="2141.62" y="1011.40" font-size="24" fill="#1a5a1a" stroke="#1a5a1a" stroke-width="0.3" textLength="29.88" lengthAdjust="spacingAndGlyphs">16</text>
<rect x="2175.82" y="999.02" width="3.07" height="2.78" fill="#1a5a1a"/>
<rect x="2175.82" y="1008.62" width="3.07" height="2.78" fill="#1a5a1a"/>
<text x="2183.49" y="1011.40" font-size="24" fill="#1a5a1a" stroke="#1a5a1a" stroke-width="0.3" textLength="29.63" lengthAdjust="spacingAndGlyphs">14</text>
<text x="2393.50" y="1011.40" font-size="24" fill="#1a5a1a" stroke="#1a5a1a" stroke-width="0.3" textLength="29.88" lengthAdjust="spacingAndGlyphs">16</text>
<rect x="2427.70" y="999.02" width="3.07" height="2.78" fill="#1a5a1a"/>
<rect x="2427.70" y="1008.62" width="3.07" height="2.78" fill="#1a5a1a"/>
<text x="2435.40" y="1011.40" font-size="24" fill="#1a5a1a" stroke="#1a5a1a" stroke-width="0.3" textLength="29.16" lengthAdjust="spacingAndGlyphs">15</text>
<text x="24.25" y="939.60" font-size="23" fill="#404040" stroke="#404040" stroke-width="0.3" textLength="45.11" lengthAdjust="spacingAndGlyphs">160</text>
<text x="55.09" y="981.20" font-size="23" fill="#404040" stroke="#404040" stroke-width="0.3" textLength="14.21" lengthAdjust="spacingAndGlyphs">0</text>
<text x="2592.26" y="939.70" font-size="24" fill="#cc0000" stroke="#cc0000" stroke-width="0.3" textLength="30.30" lengthAdjust="spacingAndGlyphs">30</text>
<rect x="0.00" y="1020.00" width="2638.00" height="88.00" fill="#ebebeb" />
<text x="7.34" y="1057.30" font-size="25" fill="#000" stroke="#000" stroke-width="0.3" textLength="136.29" lengthAdjust="spacingAndGlyphs">05.10.2021</text>
<text x="152.77" y="1057.30" font-size="25" fill="#000" stroke="#000" stroke-width="0.3" textLength="29.65" lengthAdjust="spacingAndGlyphs">16</text>
<rect x="186.63" y="1044.40" width="3.20" height="2.90" fill="#000"/>
<rect x="186.63" y="1054.40" width="3.20" height="2.90" fill="#000"/>
<text x="194.23" y="1057.30" font-size="25" fill="#000" stroke="#000" stroke-width="0.3" textLength="29.57" lengthAdjust="spacingAndGlyphs">08</text>
<rect x="228.16" y="1044.40" width="3.20" height="2.90" fill="#000"/>
<rect x="228.16" y="1054.40" width="3.20" height="2.90" fill="#000"/>
<text x="235.84" y="1057.30" font-size="25" fill="#000" stroke="#000" stroke-width="0.3" textLength="29.41" lengthAdjust="spacingAndGlyphs">10</text>
<text x="272.77" y="1057.30" font-size="25" fill="#000" stroke="#000" stroke-width="0.3" textLength="79.12" lengthAdjust="spacingAndGlyphs">Target</text>
<text x="360.30" y="1057.30" font-size="25" fill="#000" stroke="#000" stroke-width="0.3" textLength="67.74" lengthAdjust="spacingAndGlyphs">name</text>
<text x="436.82" y="1057.30" font-size="25" fill="#000" stroke="#000" stroke-width="0.3" textLength="184.67" lengthAdjust="spacingAndGlyphs">www.google.de</text>
<text x="629.40" y="1057.30" font-size="25" fill="#000" stroke="#000" stroke-width="0.3" textLength="103.14" lengthAdjust="spacingAndGlyphs">changed</text>
<text x="740.79" y="1057.30" font-size="25" fill="#000" stroke="#000" stroke-width="0.3" textLength="56.15" lengthAdjust="spacingAndGlyphs">from</text>
<text x="805.19" y="1057.30" font-size="25" fill="#000" stroke="#000" stroke-width="0.3" textLength="59.68" lengthAdjust="spacingAndGlyphs">2a00</text>
<rect x="869.29" y="1044.40" width="3.20" height="2.90" fill="#000"/>
<rect x="869.29" y="1054.40" width="3.20" height="2.90" fill="#000"/>
<text x="876.93" y="1057.30" font-size="25" fill="#000" stroke="#000" stroke-width="0.3" textLength="60.08" lengthAdjust="spacingAndGlyphs">1450</text>
<rect x="941.42" y="1044.40" width="3.20" height="2.90" fill="#000"/>
<rect x="941.42" y="1054.40" width="3.20" height="2.90" fill="#000"/>
<text x="949.02" y="1057.30" font-size="25" fill="#000" stroke="#000" stroke-width="0.3" textLength="60.33" lengthAdjust="spacingAndGlyphs">4016</text>
<rect x="1013.54" y="1044.40" width="3.20" height="2.90" fill="#000"/>
<rect x="1013.54" y="1054.40" width="3.20" height="2.90" fill="#000"/>
<text x="1021.05" y="1057.30" font-size="25" fill="#000" stroke="#000" stroke-width="0.3" textLength="45.24" lengthAdjust="spacingAndGlyphs">80b</text>
<rect x="1070.33" y="1044.40" width="3.20" height="2.90" fill="#000"/>
<rect x="1070.33" y="1054.40" width="3.20" height="2.90" fill="#000"/>
<rect x="1081.26" y="1044.40" width="3.20" height="2.90" fill="#000"/>
<rect x="1081.26" y="1054.40" width="3.20" height="2.90" fill="#000"/>
<text x="1088.71" y="1057.30" font-size="25" fill="#000" stroke="#000" stroke-width="0.3" textLength="60.06" lengthAdjust="spacingAndGlyphs">2003</text>
<text x="1157.38" y="1057.30" font-size="25" fill="#000" stroke="#000" stroke-width="0.3" textLength="23.81" lengthAdjust="spacingAndGlyphs">to</text>
<text x="1189.36" y="1057.30" font-size="25" fill="#000" stroke="#000" stroke-width="0.3" textLength="59.68" lengthAdjust="spacingAndGlyphs">2a00</text>
<rect x="1253.46" y="1044.40" width="3.20" height="2.90" fill="#000"/>
<rect x="1253.46" y="1054.40" width="3.20" height="2.90" fill="#000"/>
<text x="1261.10" y="1057.30" font-size="25" fill="#000" stroke="#000" stroke-width="0.3" textLength="60.08" lengthAdjust="spacingAndGlyphs">1450</text>
<rect x="1325.59" y="1044.40" width="3.20" height="2.90" fill="#000"/>
<rect x="1325.59" y="1054.40" width="3.20" height="2.90" fill="#000"/>
<text x="1333.20" y="1057.30" font-size="25" fill="#000" stroke="#000" stroke-width="0.3" textLength="59.67" lengthAdjust="spacingAndGlyphs">4005</text>
<rect x="1397.72" y="1044.40" width="3.20" height="2.90" fill="#000"/>
<rect x="1397.72" y="1054.40" width="3.20" height="2.90" fill="#000"/>
<text x="1405.25" y="1057.30" font-size="25" fill="#000" stroke="#000" stroke-width="0.3" textLength="44.36" lengthAdjust="spacingAndGlyphs">802</text>
<rect x="1454.54" y="1044.40" width="3.20" height="2.90" fill="#000"/>
<rect x="1454.54" y="1054.40" width="3.20" height="2.90" fill="#000"/>
<rect x="1465.46" y="1044.40" width="3.20" height="2.90" fill="#000"/>
<rect x="1465.46" y="1054.40" width="3.20" height="2.90" fill="#000"/>
<text x="1472.92" y="1057.30" font-size="25" fill="#000" stroke="#000" stroke-width="0.3" textLength="60.06" lengthAdjust="spacingAndGlyphs">2003</text>
<text x="7.34" y="1101.50" font-size="25" fill="#000" stroke="#000" stroke-width="0.3" textLength="136.29" lengthAdjust="spacingAndGlyphs">05.10.2021</text>
<text x="152.77" y="1101.50" font-size="25" fill="#000" stroke="#000" stroke-width="0.3" textLength="29.65" lengthAdjust="spacingAndGlyphs">16</text>
<rect x="186.63" y="1088.60" width="3.20" height="2.90" fill="#000"/>
<rect x="186.63" y="1098.60" width="3.20" height="2.90" fill="#000"/>
<text x="194.33" y="1101.50" font-size="25" fill="#000" stroke="#000" stroke-width="0.3" textLength="29.19" lengthAdjust="spacingAndGlyphs">13</text>
<rect x="228.16" y="1088.60" width="3.20" height="2.90" fill="#000"/>
<rect x="228.16" y="1098.60" width="3.20" height="2.90" fill="#000"/>
<text x="235.84" y="1101.50" font-size="25" fill="#000" stroke="#000" stroke-width="0.3" textLength="29.41" lengthAdjust="spacingAndGlyphs">10</text>
<text x="272.77" y="1101.50" font-size="25" fill="#000" stroke="#000" stroke-width="0.3" textLength="79.12" lengthAdjust="spacingAndGlyphs">Target</text>
<text x="360.30" y="1101.50" font-size="25" fill="#000" stroke="#000" stroke-width="0.3" textLength="67.74" lengthAdjust="spacingAndGlyphs">name</text>
<text x="436.82" y="1101.50" font-size="25" fill="#000" stroke="#000" stroke-width="0.3" textLength="184.67" lengthAdjust="spacingAndGlyphs">www.google.de</text>
<text x="629.40" y="1101.50" font-size="25" fill="#000" stroke="#000" stroke-width="0.3" textLength="103.14" lengthAdjust="spacingAndGlyphs">changed</text>
<text x="740.79" y="1101.50" font-size="25" fill="#000" stroke="#000" stroke-width="0.3" textLength="56.15" lengthAdjust="spacingAndGlyphs">from</text>
<text x="805.19" y="1101.50" font-size="25" fill="#000" stroke="#000" stroke-width="0.3" textLength="59.68" lengthAdjust="spacingAndGlyphs">2a00</text>
<rect x="869.29" y="1088.60" width="3.20" height="2.90" fill="#000"/>
<rect x="869.29" y="1098.60" width="3.20" height="2.90" fill="#000"/>
<text x="876.93" y="1101.50" font-size="25" fill="#000" stroke="#000" stroke-width="0.3" textLength="60.08" lengthAdjust="spacingAndGlyphs">1450</text>
<rect x="941.42" y="1088.60" width="3.20" height="2.90" fill="#000"/>
<rect x="941.42" y="1098.60" width="3.20" height="2.90" fill="#000"/>
<text x="949.03" y="1101.50" font-size="25" fill="#000" stroke="#000" stroke-width="0.3" textLength="59.67" lengthAdjust="spacingAndGlyphs">4005</text>
<rect x="1013.54" y="1088.60" width="3.20" height="2.90" fill="#000"/>
<rect x="1013.54" y="1098.60" width="3.20" height="2.90" fill="#000"/>
<text x="1021.08" y="1101.50" font-size="25" fill="#000" stroke="#000" stroke-width="0.3" textLength="44.36" lengthAdjust="spacingAndGlyphs">802</text>
<rect x="1070.37" y="1088.60" width="3.20" height="2.90" fill="#000"/>
<rect x="1070.37" y="1098.60" width="3.20" height="2.90" fill="#000"/>
<rect x="1081.29" y="1088.60" width="3.20" height="2.90" fill="#000"/>
<rect x="1081.29" y="1098.60" width="3.20" height="2.90" fill="#000"/>
<text x="1088.75" y="1101.50" font-size="25" fill="#000" stroke="#000" stroke-width="0.3" textLength="60.06" lengthAdjust="spacingAndGlyphs">2003</text>
<text x="1157.41" y="1101.50" font-size="25" fill="#000" stroke="#000" stroke-width="0.3" textLength="23.81" lengthAdjust="spacingAndGlyphs">to</text>
<text x="1189.40" y="1101.50" font-size="25" fill="#000" stroke="#000" stroke-width="0.3" textLength="59.68" lengthAdjust="spacingAndGlyphs">2a00</text>
<rect x="1253.50" y="1088.60" width="3.20" height="2.90" fill="#000"/>
<rect x="1253.50" y="1098.60" width="3.20" height="2.90" fill="#000"/>
<text x="1261.14" y="1101.50" font-size="25" fill="#000" stroke="#000" stroke-width="0.3" textLength="60.08" lengthAdjust="spacingAndGlyphs">1450</text>
<rect x="1325.62" y="1088.60" width="3.20" height="2.90" fill="#000"/>
<rect x="1325.62" y="1098.60" width="3.20" height="2.90" fill="#000"/>
<text x="1333.23" y="1101.50" font-size="25" fill="#000" stroke="#000" stroke-width="0.3" textLength="60.33" lengthAdjust="spacingAndGlyphs">4016</text>
<rect x="1397.75" y="1088.60" width="3.20" height="2.90" fill="#000"/>
<rect x="1397.75" y="1098.60" width="3.20" height="2.90" fill="#000"/>
<text x="1405.26" y="1101.50" font-size="25" fill="#000" stroke="#000" stroke-width="0.3" textLength="45.24" lengthAdjust="spacingAndGlyphs">80b</text>
<rect x="1454.54" y="1088.60" width="3.20" height="2.90" fill="#000"/>
<rect x="1454.54" y="1098.60" width="3.20" height="2.90" fill="#000"/>
<rect x="1465.46" y="1088.60" width="3.20" height="2.90" fill="#000"/>
<rect x="1465.46" y="1098.60" width="3.20" height="2.90" fill="#000"/>
<text x="1472.92" y="1101.50" font-size="25" fill="#000" stroke="#000" stroke-width="0.3" textLength="60.06" lengthAdjust="spacingAndGlyphs">2003</text>
<rect x="0.00" y="1108.00" width="2638.00" height="2.00" fill="#c0c0c0" />
<rect x="0.00" y="1110.00" width="2638.00" height="42.00" fill="#ebebeb" />
<text x="816.87" y="1140.70" font-size="25" fill="#000" stroke="#000" stroke-width="0.3" textLength="76.23" lengthAdjust="spacingAndGlyphs">Image</text>
<text x="901.08" y="1140.70" font-size="25" fill="#000" stroke="#000" stroke-width="0.3" textLength="125.01" lengthAdjust="spacingAndGlyphs">generated</text>
<text x="1034.71" y="1140.70" font-size="25" fill="#000" stroke="#000" stroke-width="0.3" textLength="28.70" lengthAdjust="spacingAndGlyphs">by</text>
<text x="1071.97" y="1140.70" font-size="25" fill="#000" stroke="#000" stroke-width="0.3" textLength="132.90" lengthAdjust="spacingAndGlyphs">PingPlotter</text>
<text x="1212.83" y="1140.70" font-size="25" fill="#000" stroke="#000" stroke-width="0.3" textLength="108.18" lengthAdjust="spacingAndGlyphs">Windows</text>
<text x="1329.74" y="1140.70" font-size="25" fill="#000" stroke="#000" stroke-width="0.3" textLength="145.51" lengthAdjust="spacingAndGlyphs">5.19.5.8467</text>
<text x="1484.01" y="1140.70" font-size="25" fill="#000" stroke="#000" stroke-width="0.3" textLength="38.93" lengthAdjust="spacingAndGlyphs">Pro</text>
<text x="1531.20" y="1140.70" font-size="25" fill="#000" stroke="#000" stroke-width="0.3" textLength="59.06" lengthAdjust="spacingAndGlyphs">(http</text>
<rect x="1594.28" y="1127.80" width="3.20" height="2.90" fill="#000"/>
<rect x="1594.28" y="1137.80" width="3.20" height="2.90" fill="#000"/>
<text x="1601.40" y="1140.70" font-size="25" fill="#000" stroke="#000" stroke-width="0.3" textLength="219.36" lengthAdjust="spacingAndGlyphs">//pingplotter.com)</text></svg>
</body></html>
